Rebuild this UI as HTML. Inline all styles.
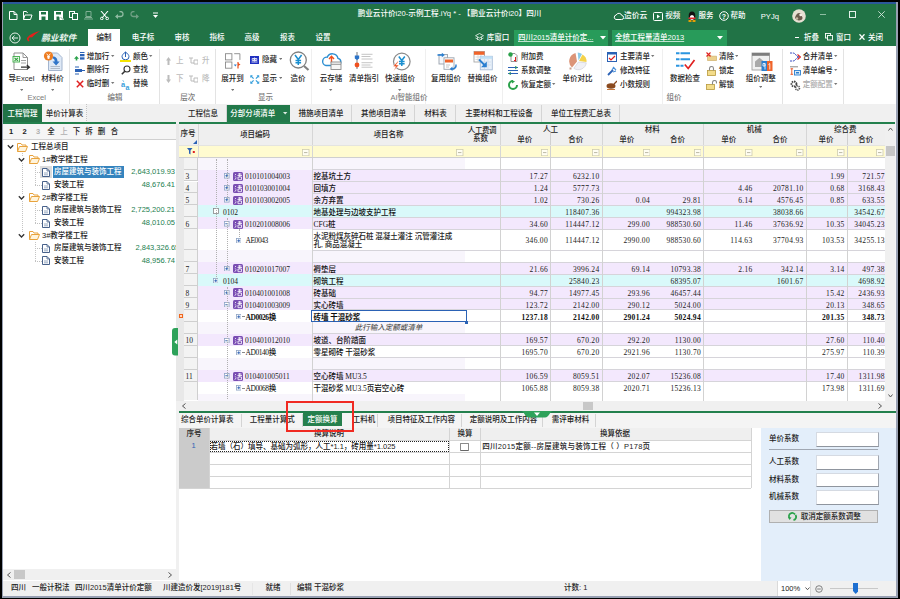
<!DOCTYPE html>
<html lang="zh-CN"><head><meta charset="utf-8"><title>鹏业云计价i20</title><style>
html,body{margin:0;padding:0;}
body{width:900px;height:599px;position:relative;overflow:hidden;background:#fff;
 font-family:"Liberation Sans","Noto Sans CJK SC",sans-serif;font-size:7.5px;font-weight:500;}
div,svg{position:absolute;box-sizing:border-box;}
.t{white-space:nowrap;line-height:12px;height:12px;}
.s{font-family:"Liberation Serif","Noto Sans CJK SC",serif;margin-top:1.600px;}
.sc{font-family:"Liberation Serif","Noto Sans CJK SC",serif;margin-top:0.300px;}
.b{font-weight:bold;}
</style></head><body>
<div style="left:0px;top:0px;width:900px;height:599px;background:#000;"></div>
<div style="left:1.7px;top:1.7px;width:896.5px;height:596px;background:#98a0b2;"></div>
<div style="left:3px;top:2px;width:893.3px;height:594.3px;background:#fff;"></div>
<div style="left:3px;top:1.8px;width:893.3px;height:2px;background:#2b579a;"></div>
<div style="left:3px;top:3.8px;width:893.3px;height:42.2px;background:#217346;"></div>
<svg style="left:9px;top:10.5px" width="9" height="9" viewBox="0 0 9 9"><path d="M0.5 0.5h4.5l3 3v5h-7.5z" fill="none" stroke="#fff" stroke-width="1"/><path d="M5 0.5v3h3" fill="none" stroke="#fff" stroke-width="1"/></svg>
<svg style="left:23px;top:10.5px" width="10" height="9" viewBox="0 0 10 9"><path d="M0.5 8.5v-8h3l1 1.5h0M0.5 8.5l1.5-4.5h7l-1.5 4.5z" fill="none" stroke="#fff" stroke-width="1"/></svg>
<svg style="left:38.5px;top:10.5px" width="9" height="9" viewBox="0 0 9 9"><rect x="0" y="0" width="9" height="9" fill="#fff"/><rect x="2" y="1" width="5" height="2.500" fill="#217346"/><rect x="2.500" y="5.500" width="4" height="3.500" fill="#217346"/></svg>
<svg style="left:53.5px;top:10.5px" width="10" height="9" viewBox="0 0 10 9"><rect x="0" y="0" width="9" height="9" fill="#fff"/><rect x="2" y="1" width="5" height="2.500" fill="#217346"/><rect x="2.500" y="5.500" width="3" height="3.500" fill="#217346"/><path d="M5.500 5l4 4" stroke="#fff" stroke-width="1.600"/><path d="M6.500 6l3 3" stroke="#217346" stroke-width="0.600"/></svg>
<svg style="left:68.5px;top:10.5px" width="9" height="9" viewBox="0 0 9 9"><rect x="0.5" y="0.5" width="5" height="6" fill="none" stroke="#fff"/><rect x="3.5" y="2.5" width="5" height="6" fill="#217346" stroke="#fff"/></svg>
<svg style="left:84px;top:10.5px" width="9" height="9" viewBox="0 0 9 9"><path d="M2 0.5h5v5h-5zM0 8h9M1 6.5h7" fill="none" stroke="#7fae93" stroke-width="1"/></svg>
<svg style="left:100px;top:10.5px" width="9" height="9" viewBox="0 0 9 9"><path d="M1 0l6 7M8 0l-6 7" stroke="#fff" stroke-width="1.1"/><circle cx="1.8" cy="7.5" r="1.3" fill="none" stroke="#fff"/><circle cx="7.2" cy="7.5" r="1.3" fill="none" stroke="#fff"/></svg>
<svg style="left:115px;top:10.5px" width="9" height="9" viewBox="0 0 9 9"><path d="M1 5.5h4.5a2.5 2.5 0 0 0 0-5h-1" fill="none" stroke="#8fbaa1" stroke-width="1.3"/><path d="M0 5.5l3-2.6v5.2z" fill="#8fbaa1"/></svg>
<svg style="left:130px;top:10.5px" width="9" height="9" viewBox="0 0 9 9"><path d="M8 5.5h-4.5a2.5 2.5 0 0 1 0-5h1" fill="none" stroke="#6f9f84" stroke-width="1.3"/><path d="M9 5.5l-3-2.6v5.2z" fill="#6f9f84"/></svg>
<svg style="left:152px;top:12px" width="7" height="7" viewBox="0 0 7 7"><path d="M1 1h5" stroke="#fff" stroke-width="1"/><path d="M1 3h5l-2.5 3z" fill="#fff"/></svg>
<div class="t" style="top:8.0px;font-size:7.6px;color:#fff;left:449.5px;transform:translateX(-50%);">鹏业云计价i20-示例工程.iYq * - 【鹏业云计价i20】四川</div>
<svg style="left:612.7px;top:11.8px" width="11" height="9" viewBox="0 0 11 9"><path d="M3 7.5h5.5a2 2 0 0 0 .3-4a3 3 0 0 0-5.6-.5a2.3 2.3 0 0 0-.2 4.5z" fill="none" stroke="#fff" stroke-width="1"/></svg>
<div class="t" style="top:10.3px;font-size:7.8px;color:#fff;left:624px;">造价云</div>
<svg style="left:652.8px;top:12px" width="10" height="9" viewBox="0 0 10 9"><rect x="0.5" y="0.5" width="9" height="8" rx="1" fill="none" stroke="#fff"/><path d="M4 2.5v4l3-2z" fill="#fff"/></svg>
<div class="t" style="top:10.3px;font-size:7.5px;color:#fff;left:665.3px;">视频</div>
<svg style="left:686.8px;top:10.8px" width="10" height="11" viewBox="0 0 10 11"><ellipse cx="5" cy="5" rx="3.3" ry="4.5" fill="#111"/><ellipse cx="5" cy="6.5" rx="2.2" ry="2.6" fill="#fff"/><path d="M1.5 6.5h7v1.6h-7z" fill="#e0262b"/><ellipse cx="3" cy="10" rx="1.8" ry="0.9" fill="#f5a300"/><ellipse cx="7" cy="10" rx="1.8" ry="0.9" fill="#f5a300"/></svg>
<div class="t" style="top:10.3px;font-size:7.5px;color:#fff;left:698.5px;">服务</div>
<svg style="left:718.6px;top:11.3px" width="10" height="10" viewBox="0 0 10 10"><circle cx="5" cy="5" r="4.3" fill="none" stroke="#fff" stroke-width="1"/><text x="5" y="7.6" font-size="7" font-weight="bold" fill="#fff" text-anchor="middle" font-family="Liberation Sans, sans-serif">?</text></svg>
<div class="t" style="top:10.3px;font-size:7.5px;color:#fff;left:730.5px;">帮助</div>
<div class="t" style="top:11.0px;font-size:7.6px;color:#fff;left:760.8px;">PYJq</div>
<svg style="left:792.4px;top:9.4px" width="14" height="14" viewBox="0 0 14 14"><circle cx="7" cy="7" r="6.800" fill="#e6dfd2"/><path d="M3 9c.500-3 2-5 4.500-5c2 0 3 1.500 2.500 3.500c1 1 .500 3-1 3.500c-2 .800-4.500.500-6-2z" fill="#6b5a4c"/><circle cx="8.800" cy="5.800" r="1.500" fill="#f3eee4"/><circle cx="5" cy="9.500" r="1.200" fill="#c9b9a4"/></svg>
<div style="left:819.7px;top:13.8px;width:6.6px;height:1px;background:#8fbea3;"></div>
<div style="left:848.7px;top:11px;width:7.2px;height:6.8px;border:1px solid #e4f0e9;"></div>
<svg style="left:878.3px;top:11px" width="7" height="7" viewBox="0 0 7 7"><path d="M0.300 0.300l6.400 6.400M6.700 0.300l-6.400 6.400" stroke="#d4e6db" stroke-width="0.900"/></svg>
<svg style="left:8.5px;top:31.5px" width="12" height="12" viewBox="0 0 12 12"><circle cx="6" cy="6" r="5" fill="none" stroke="#e6f0ea" stroke-width="1"/><path d="M3 6h6M3 6l2.6-2.4M3 6l2.6 2.4" stroke="#e6f0ea" stroke-width="1" fill="none"/></svg>
<svg style="left:26px;top:30px" width="15" height="13" viewBox="0 0 15 13"><path d="M1 8c3-4 8-6 13-7c-3 2-6 4-8 6.5c-1-.5-2-.3-3 .5c-.6 1-.2 2 .6 2.700l-1 .8c-1.600-1-2-2.300-1.600-3.500z" fill="#e3201b"/></svg>
<div class="t b" style="top:31.5px;font-size:8.8px;color:#e9f3ed;left:41px;font-style:italic;font-family:"Liberation Serif","Noto Serif CJK SC",serif;">鹏业软件</div>
<div style="left:88px;top:29px;width:32px;height:18px;background:#fff;"></div>
<div class="t" style="top:32.0px;font-size:7.5px;color:#222;left:104px;transform:translateX(-50%);">编制</div>
<div class="t" style="top:32.0px;font-size:7.5px;color:#fff;left:143px;transform:translateX(-50%);">电子标</div>
<div class="t" style="top:32.0px;font-size:7.5px;color:#fff;left:182px;transform:translateX(-50%);">审核</div>
<div class="t" style="top:32.0px;font-size:7.5px;color:#fff;left:217px;transform:translateX(-50%);">指标</div>
<div class="t" style="top:32.0px;font-size:7.5px;color:#fff;left:252px;transform:translateX(-50%);">高级</div>
<div class="t" style="top:32.0px;font-size:7.5px;color:#fff;left:287.5px;transform:translateX(-50%);">报表</div>
<div class="t" style="top:32.0px;font-size:7.5px;color:#fff;left:323px;transform:translateX(-50%);">设置</div>
<svg style="left:475px;top:33px" width="9" height="9" viewBox="0 0 9 9"><path d="M4.500.5l4 2.200l-4 2.200l-4-2.200z" fill="none" stroke="#dcebe2" stroke-width="0.900"/><path d="M0.500 5l4 2.200l4-2.200M2.500 4v3M6.500 4v3" fill="none" stroke="#dcebe2" stroke-width="0.800"/></svg>
<div class="t" style="top:31.5px;font-size:7.5px;color:#fff;left:486.7px;">库窗口</div>
<div style="left:514px;top:30px;width:94px;height:15.5px;background:#289b5a;"></div>
<div class="t" style="top:31.5px;font-size:7.5px;color:#fff;left:518px;text-decoration:underline;text-decoration-color:#bfe3cf;">四川2015清单计价定...</div>
<svg style="left:600px;top:36px" width="6" height="4" viewBox="0 0 6 4"><path d="M0 0h6l-3 3.500z" fill="#fff"/></svg>
<div style="left:611.5px;top:30px;width:115px;height:15.5px;background:#289b5a;"></div>
<div class="t" style="top:31.5px;font-size:7.5px;color:#fff;left:615px;text-decoration:underline;text-decoration-color:#bfe3cf;">全统工程量清单2013</div>
<svg style="left:716.5px;top:36px" width="6" height="4" viewBox="0 0 6 4"><path d="M0 0h6l-3 3.500z" fill="#fff"/></svg>
<div style="left:795.3px;top:37.3px;width:4px;height:1.2px;background:#fff;"></div>
<div class="t" style="top:31.5px;font-size:7.5px;color:#fff;left:804px;">折叠</div>
<svg style="left:824.7px;top:33px" width="8.5" height="8" viewBox="0 0 8.5 8"><rect x="0.500" y="0.500" width="5" height="4.500" fill="none" stroke="#fff" stroke-width="0.900"/><rect x="2.500" y="2.500" width="5" height="4.500" fill="#217346" stroke="#fff" stroke-width="0.900"/></svg>
<div class="t" style="top:31.5px;font-size:7.5px;color:#fff;left:836px;">窗口</div>
<svg style="left:859px;top:34px" width="6" height="6" viewBox="0 0 6 6"><path d="M0.500 0.300l5 5.400M5.500 0.300l-5 5.400" stroke="#fff" stroke-width="1.300"/></svg>
<div class="t" style="top:31.5px;font-size:7.5px;color:#fff;left:868px;">关闭</div>
<div style="left:3px;top:46px;width:893.3px;height:58px;background:#fff;"></div>
<div style="left:69px;top:49px;width:1px;height:55px;background:#e3e3e3;"></div>
<div style="left:158.5px;top:49px;width:1px;height:55px;background:#e3e3e3;"></div>
<div style="left:215px;top:49px;width:1px;height:55px;background:#e3e3e3;"></div>
<div style="left:781.5px;top:49px;width:1px;height:55px;background:#e3e3e3;"></div>
<div style="left:842.5px;top:49px;width:1px;height:55px;background:#e3e3e3;"></div>
<div style="left:311px;top:49px;width:1px;height:55px;background:#efefef;"></div>
<div style="left:424.5px;top:49px;width:1px;height:55px;background:#efefef;"></div>
<div style="left:502px;top:49px;width:1px;height:55px;background:#efefef;"></div>
<div style="left:601px;top:49px;width:1px;height:55px;background:#efefef;"></div>
<div style="left:662px;top:49px;width:1px;height:55px;background:#efefef;"></div>
<svg style="left:12px;top:51.5px" width="19" height="19" viewBox="0 0 19 19"><path d="M2 1h9l4.500 4.500v12h-13.500z" fill="#fff" stroke="#8f8f8f" stroke-width="1"/><path d="M11 1v4.500h4.500" fill="none" stroke="#8f8f8f" stroke-width="0.900"/><path d="M9 8.500h5M9 11h5" stroke="#9a9a9a" stroke-width="0.900"/><path d="M9 15.200h8M14.800 13l2.700 2.200l-2.700 2.200" stroke="#333" stroke-width="1.200" fill="none"/><rect x="1" y="4.500" width="6.500" height="5.500" fill="#eef8ee" stroke="#3fae49" stroke-width="0.900"/><path d="M2.500 5.800l3.500 3M6 5.800l-3.500 3" stroke="#2f9e3a" stroke-width="1.100"/></svg>
<div class="t" style="top:72.7px;font-size:7.5px;color:#222;left:21.5px;transform:translateX(-50%);">导Excel</div>
<svg style="left:19.8px;top:89.2px" width="3.4" height="2.2" viewBox="0 0 3.4 2.2"><path d="M0 0h3.400l-1.700 2z" fill="#777"/></svg>
<svg style="left:43px;top:51px" width="21" height="21" viewBox="0 0 21 21"><path d="M5.500 2h9l4.500 4.500v13h-13.500z" fill="#dfe9f6" stroke="#a3b5cf" stroke-width="1"/><path d="M7.500 15.500h9.500M7.500 17.500h9.500" stroke="#a9b4c4" stroke-width="0.900"/><path d="M9.500 5.500c3.500 0 5 2 5 5h2.200l-3.600 4l-3.600-4h2.200c0-2-.700-3-2.200-3z" fill="#2e74c9"/><circle cx="5.500" cy="5" r="4.600" fill="#ee7d22"/><path d="M3.700 2.700l1.800 2.400l1.800-2.400M5.500 5.100v2.800M4 5.600h3M4 6.900h3" stroke="#fff" stroke-width="0.900" fill="none"/></svg>
<div class="t" style="top:72.7px;font-size:7.5px;color:#222;left:52.5px;transform:translateX(-50%);">材料价</div>
<svg style="left:50.8px;top:89.2px" width="3.4" height="2.2" viewBox="0 0 3.4 2.2"><path d="M0 0h3.400l-1.700 2z" fill="#777"/></svg>
<div class="t" style="top:91.7px;font-size:7.5px;color:#7a7a7a;left:36.7px;transform:translateX(-50%);">Excel</div>
<svg style="left:74px;top:51.5px" width="11" height="9" viewBox="0 0 11 9"><rect x="6" y="0" width="4.500" height="1" fill="#2b62b5"/><rect x="6" y="2" width="4.500" height="2.300" fill="#2b62b5"/><rect x="6" y="5.300" width="4.500" height="2.300" fill="#2b62b5"/><path d="M2.500 4l2.500 2.800h-1.700v1.700h-1.600v-1.700h-1.700z" fill="#2aa14a"/></svg>
<div class="t" style="top:50.5px;font-size:7.5px;color:#222;left:86.7px;">增加行</div>
<svg style="left:111.3px;top:54.900000000000006px" width="3.4" height="2.2" viewBox="0 0 3.4 2.2"><path d="M0 0h3.400l-1.700 2z" fill="#777"/></svg>
<svg style="left:74.5px;top:65.5px" width="10" height="9" viewBox="0 0 10 9"><path d="M0 1h4M0 8h4" stroke="#2b62b5" stroke-width="1"/><rect x="0" y="3" width="7" height="3" fill="#2b62b5"/><path d="M7 4.500h3" stroke="#2b62b5" stroke-width="1"/></svg>
<div class="t" style="top:64.0px;font-size:7.5px;color:#222;left:86.7px;">删除行</div>
<svg style="left:76px;top:80px" width="8" height="8" viewBox="0 0 8 8"><path d="M0.800 0.800l6.400 6.400M7.200 0.800l-6.400 6.400" stroke="#e02020" stroke-width="1.500"/></svg>
<div class="t" style="top:78.0px;font-size:7.5px;color:#222;left:86.7px;">临时删</div>
<svg style="left:111.3px;top:82.4px" width="3.4" height="2.2" viewBox="0 0 3.4 2.2"><path d="M0 0h3.400l-1.700 2z" fill="#777"/></svg>
<svg style="left:120px;top:50.5px" width="11" height="11" viewBox="0 0 11 11"><path d="M5.500 1c-2 1.500-3.500 3-3.500 4.800a3.500 3 0 0 0 7 0c0-1.800-1.500-3.300-3.500-4.800z" fill="#fff" stroke="#2b62b5" stroke-width="1"/><path d="M5.500 1v5" stroke="#2b62b5"/><rect x="0" y="9" width="11" height="2" fill="#f5e400"/></svg>
<div class="t" style="top:50.5px;font-size:7.5px;color:#222;left:133px;">颜色</div>
<svg style="left:149.3px;top:54.900000000000006px" width="3.4" height="2.2" viewBox="0 0 3.4 2.2"><path d="M0 0h3.400l-1.700 2z" fill="#777"/></svg>
<svg style="left:121px;top:65px" width="10" height="10" viewBox="0 0 10 10"><circle cx="6" cy="4" r="3" fill="none" stroke="#333" stroke-width="1.100"/><path d="M3.800 6.200l-3 3" stroke="#333" stroke-width="1.600"/></svg>
<div class="t" style="top:64.0px;font-size:7.5px;color:#222;left:133px;">查找</div>
<svg style="left:121px;top:79.5px" width="10" height="10" viewBox="0 0 10 10"><text x="0" y="6.500" font-size="7.500" font-weight="bold" fill="#3aa0dc" font-family="Liberation Sans, sans-serif">a</text><text x="4.500" y="9.500" font-size="7" font-weight="bold" fill="#3aa0dc" font-family="Liberation Sans, sans-serif">a</text><path d="M1.500 0.300l1.600 1.400" stroke="#3aa0dc" stroke-width="0.800"/></svg>
<div class="t" style="top:78.0px;font-size:7.5px;color:#222;left:133px;">替换</div>
<div class="t" style="top:91.7px;font-size:7.5px;color:#7a7a7a;left:115px;transform:translateX(-50%);">编辑</div>
<svg style="left:165.5px;top:57px" width="5" height="8" viewBox="0 0 5 8"><path d="M2.500 0l2.500 3.500h-1.500v4.500h-2v-4.500h-1.500z" fill="#bcbcbc"/></svg>
<div class="t" style="top:54.6px;font-size:7.5px;color:#bcbcbc;left:179.8px;transform:translateX(-50%);">上</div>
<svg style="left:189px;top:57px" width="9" height="8" viewBox="0 0 9 8"><path d="M0 1h4M2 1v5h3M5 3h4v4h-4z" fill="none" stroke="#bcbcbc" stroke-width="1"/></svg>
<div class="t" style="top:54.6px;font-size:7.5px;color:#bcbcbc;left:205.7px;transform:translateX(-50%);">升</div>
<svg style="left:165.5px;top:75px" width="5" height="8" viewBox="0 0 5 8"><path d="M2.500 8l2.500-3.500h-1.500v-4.500h-2v4.500h-1.500z" fill="#bcbcbc"/></svg>
<div class="t" style="top:73.0px;font-size:7.5px;color:#bcbcbc;left:179.8px;transform:translateX(-50%);">下</div>
<svg style="left:189px;top:75px" width="9" height="8" viewBox="0 0 9 8"><path d="M0 1h4M2 1v5h3M5 3h4v4h-4z" fill="none" stroke="#bcbcbc" stroke-width="1"/></svg>
<div class="t" style="top:73.0px;font-size:7.5px;color:#bcbcbc;left:205.7px;transform:translateX(-50%);">降</div>
<div class="t" style="top:91.7px;font-size:7.5px;color:#7a7a7a;left:187.8px;transform:translateX(-50%);">层次</div>
<svg style="left:224.5px;top:52.5px" width="16" height="16" viewBox="0 0 16 16"><rect x="0.500" y="0.700" width="6.400" height="6.200" fill="none" stroke="#8a8a8a" stroke-width="0.900"/><path d="M9.200 0.700h5.700v6.200" fill="none" stroke="#8a8a8a" stroke-width="0.900"/><rect x="0.500" y="9" width="6.400" height="6.200" fill="none" stroke="#8a8a8a" stroke-width="0.900"/><path d="M8.800 11.500h3l-1.500 2z" fill="#2b7fd0"/><path d="M13 9v6.500" stroke="#e8501e" stroke-width="1.200"/><path d="M13 10l2.500 1.500l-2.500 1.500z" fill="#e8501e"/></svg>
<div class="t" style="top:72.7px;font-size:7.5px;color:#222;left:232.5px;transform:translateX(-50%);">展开到</div>
<svg style="left:230.8px;top:89.2px" width="3.4" height="2.2" viewBox="0 0 3.4 2.2"><path d="M0 0h3.400l-1.700 2z" fill="#777"/></svg>
<svg style="left:250px;top:55.8px" width="9" height="8" viewBox="0 0 9 8"><rect x="0" y="0" width="9" height="8" fill="#1f2fc0"/><path d="M1.500 6h6M2.200 2.500h1.800v2h-1.800zM5 2.500h1.800v2h-1.800zM4.500 1.500v4" stroke="#fff" stroke-width="0.800" fill="none"/></svg>
<div class="t" style="top:54.0px;font-size:7.5px;color:#222;left:262px;">隐藏</div>
<svg style="left:278.8px;top:58.400000000000006px" width="3.4" height="2.2" viewBox="0 0 3.4 2.2"><path d="M0 0h3.400l-1.700 2z" fill="#777"/></svg>
<svg style="left:250px;top:74.5px" width="9.5" height="9" viewBox="0 0 9.5 9"><path d="M1 1l2.600 2.600M8.500 1l-2.600 2.600M1 8l2.600-2.600M8.500 8l-2.600-2.600" stroke="#3aa0dc" stroke-width="1.200" fill="none"/><path d="M0.300 0.300h2.600l-2.600 2.600zM9.200 0.300h-2.600l2.600 2.600zM0.300 8.700h2.600l-2.600-2.600zM9.200 8.700h-2.600l2.600-2.600z" fill="#3aa0dc"/></svg>
<div class="t" style="top:72.7px;font-size:7.5px;color:#222;left:262px;">显示</div>
<svg style="left:278.8px;top:77.10000000000001px" width="3.4" height="2.2" viewBox="0 0 3.4 2.2"><path d="M0 0h3.400l-1.700 2z" fill="#777"/></svg>
<div class="t" style="top:91.7px;font-size:7.5px;color:#7a7a7a;left:265.5px;transform:translateX(-50%);">显示</div>
<svg style="left:288.5px;top:51px" width="21" height="20" viewBox="0 0 21 20"><circle cx="9.300" cy="9" r="8" fill="#fff" stroke="#808080" stroke-width="1.300"/><path d="M15 15l4.500 4" stroke="#808080" stroke-width="2.200"/><path d="M6 4l3.300 4.500l3.300-4.500M9.300 8.500v5.500M6.500 9.500h5.600M6.500 11.700h5.600" stroke="#1a8fd0" stroke-width="1.500" fill="none"/></svg>
<div class="t" style="top:72.7px;font-size:7.5px;color:#222;left:298px;transform:translateX(-50%);">造价</div>
<svg style="left:320.5px;top:52px" width="21" height="18" viewBox="0 0 21 18"><path d="M5 13.500h11.500a3.600 3.600 0 0 0 .500-7.100a5.700 5.700 0 0 0-10.800-1.200a4.200 4.200 0 0 0-1.200 8.300z" fill="#fff" stroke="#2d8fd2" stroke-width="1.400"/><path d="M10.500 11v-6.500M8 7l2.500-2.800l2.500 2.800" stroke="#f0501e" stroke-width="1.400" fill="none"/><rect x="10" y="10" width="10" height="7.500" fill="#f6f6f6" stroke="#8a8a8a" stroke-width="0.900"/><path d="M10 12.300h10" stroke="#8a8a8a" stroke-width="0.900"/></svg>
<div class="t" style="top:72.7px;font-size:7.5px;color:#222;left:331px;transform:translateX(-50%);">云存储</div>
<svg style="left:329.3px;top:89.2px" width="3.4" height="2.2" viewBox="0 0 3.4 2.2"><path d="M0 0h3.400l-1.700 2z" fill="#777"/></svg>
<svg style="left:354px;top:52px" width="19" height="18" viewBox="0 0 19 18"><path d="M3 0v17" stroke="#666" stroke-width="0.900"/><path d="M0.800 3.500h4.400v3l-2.200 1.500l-2.200-1.500z" fill="#2b73c8"/><circle cx="3" cy="13" r="2.400" fill="#f0501e"/><path d="M7.500 2.300h11M7.500 4.500h9M7.500 7h11M7.500 10.700h11M7.500 13h9M7.500 15.200h11" stroke="#b5b5b5" stroke-width="0.800"/></svg>
<div class="t" style="top:72.7px;font-size:7.5px;color:#222;left:364px;transform:translateX(-50%);">清单指引</div>
<svg style="left:390.5px;top:51.5px" width="21" height="20" viewBox="0 0 21 20"><circle cx="10.800" cy="9.500" r="8.300" fill="#fff" stroke="#8a8a8a" stroke-width="1.200"/><path d="M7.800 4.500l3 4l3-4M10.800 8.500v5.500M8 9.500h5.600M8 11.700h5.600" stroke="#1a8fd0" stroke-width="1.500" fill="none"/><path d="M6.500 9.500l-4.500 5h2.800l-2.300 4.500l5.500-6h-2.800l2.300-3.500z" fill="#f0501e" stroke="#fff" stroke-width="0.500"/></svg>
<div class="t" style="top:72.7px;font-size:7.5px;color:#222;left:400px;transform:translateX(-50%);">快速组价</div>
<svg style="left:398.3px;top:89.2px" width="3.4" height="2.2" viewBox="0 0 3.4 2.2"><path d="M0 0h3.400l-1.700 2z" fill="#777"/></svg>
<div class="t" style="top:91.7px;font-size:7.5px;color:#7a7a7a;left:409px;transform:translateX(-50%);">AI智能组价</div>
<svg style="left:436.5px;top:52px" width="21" height="19" viewBox="0 0 21 19"><rect x="2" y="2.500" width="8.500" height="9.500" fill="#f4f6fa" stroke="#9aa3ad" stroke-width="0.900"/><path d="M0.500 3h5" stroke="#2b7fd0" stroke-width="1.600"/><path d="M4.800 0.800l3 2.200l-3 2.200z" fill="#2b7fd0"/><rect x="7" y="5.800" width="10" height="11.500" fill="#fff" stroke="#9aa3ad" stroke-width="0.900"/><rect x="8" y="7.500" width="8" height="3" fill="#f0642a"/><path d="M9 13h4M9 15h3" stroke="#b5b5b5" stroke-width="0.800"/><path d="M19 12.500c.500 3-1.500 4.500-4.500 4.500" stroke="#2b7fd0" stroke-width="1.500" fill="none"/><path d="M15.500 14.500l-2.800 2.500l2.800 2z" fill="#2b7fd0"/></svg>
<div class="t" style="top:72.7px;font-size:7.5px;color:#222;left:446px;transform:translateX(-50%);">复用组价</div>
<svg style="left:472.5px;top:51px" width="22" height="20" viewBox="0 0 22 20"><rect x="1" y="0.500" width="10.500" height="10.500" fill="#fff" stroke="#a8a8a8" stroke-width="0.900"/><rect x="1" y="0.500" width="10.500" height="3.300" fill="#f0642a"/><path d="M2.500 6h7.500M2.500 8.500h7.500M5 4v7M8 4v7" stroke="#cfcfcf" stroke-width="0.700"/><rect x="7.300" y="5.300" width="12" height="13.500" fill="#e9f1fa" stroke="#a9bdd6" stroke-width="0.900"/><rect x="7.300" y="5.300" width="12" height="2.500" fill="#bfe0f7"/><path d="M9 11h9M9 14h9M11.500 8v10M15 8v10" stroke="#cdd8e6" stroke-width="0.700"/><path d="M6 8.500l6.500 6.500" stroke="#2b7fd0" stroke-width="1.800"/><path d="M13.800 10.500v5.800h-5.800z" fill="#2b7fd0"/></svg>
<div class="t" style="top:72.7px;font-size:7.5px;color:#222;left:482.5px;transform:translateX(-50%);">替换组价</div>
<svg style="left:508px;top:52px" width="10" height="10" viewBox="0 0 10 10"><path d="M3 1.500h4l2 2v6h-6z" fill="#fff" stroke="#8a8a8a" stroke-width="0.900"/><circle cx="2.500" cy="2.500" r="2.200" fill="#2aa14a"/><path d="M7.500 5v4M6 8l1.500 1.500" stroke="#e02020" stroke-width="1"/></svg>
<div class="t" style="top:51.0px;font-size:7.5px;color:#222;left:521px;">附加费</div>
<svg style="left:508px;top:66px" width="10" height="9" viewBox="0 0 10 9"><path d="M0 1.500h10M0 4.500h10M0 7.500h10" stroke="#2b62b5" stroke-width="1"/><path d="M7 0l2 1.500l-2 1.500M3 6l-2 1.500l2 1.500" stroke="#2aa14a" stroke-width="0.900" fill="none"/></svg>
<div class="t" style="top:64.5px;font-size:7.5px;color:#222;left:521px;">系数调整</div>
<svg style="left:508px;top:79.5px" width="10" height="10" viewBox="0 0 10 10"><path d="M5 1a4 4 0 1 0 4 4" stroke="#2aa14a" stroke-width="2" fill="none"/><path d="M4 0l3 1.500l-3 2z" fill="#2aa14a"/></svg>
<div class="t" style="top:78.5px;font-size:7.5px;color:#222;left:521px;">恢复定额</div>
<svg style="left:552.3px;top:82.9px" width="3.4" height="2.2" viewBox="0 0 3.4 2.2"><path d="M0 0h3.400l-1.700 2z" fill="#777"/></svg>
<svg style="left:568.5px;top:52px" width="19" height="19" viewBox="0 0 19 19"><path d="M8 9.500l-1.500-8.500a8.500 8.500 0 0 0-3.500 14.500z" fill="#dc9477"/><path d="M9.500 8.500l-.800-8a8 8 0 0 1 4.300 1.500z" fill="#8ccbe8"/><path d="M10 9l3.500-6.500a8 8 0 0 1 4 7.500z" fill="#f4d24a"/><path d="M9.500 10l7.800.800a8 8 0 0 1-12.500 5.500z" fill="#f0f0f5" stroke="#c9c9d2" stroke-width="0.600"/><rect x="0.500" y="15.500" width="2" height="2" fill="#c9a08c"/></svg>
<div class="t" style="top:72.7px;font-size:7.5px;color:#222;left:577.5px;transform:translateX(-50%);">单价对比</div>
<svg style="left:606.5px;top:52.2px" width="10" height="10" viewBox="0 0 10 10"><rect x="0.500" y="0.500" width="9" height="9" fill="#fff" stroke="#2b62b5" stroke-width="1"/><rect x="0.500" y="0.500" width="9" height="2" fill="#2b62b5"/><path d="M2 6l2 2l4-4" stroke="#e02020" stroke-width="1.200" fill="none"/></svg>
<div class="t" style="top:51.0px;font-size:7.5px;color:#222;left:620px;">主要清单</div>
<svg style="left:651.3px;top:55.400000000000006px" width="3.4" height="2.2" viewBox="0 0 3.4 2.2"><path d="M0 0h3.400l-1.700 2z" fill="#777"/></svg>
<svg style="left:606.5px;top:66.2px" width="10" height="10" viewBox="0 0 10 10"><path d="M1 9l5-5" stroke="#2b62b5" stroke-width="1.800"/><path d="M6 1l3 3M5 4l2-3M9 5l-3 1" stroke="#4a90d9" stroke-width="1.200"/></svg>
<div class="t" style="top:65.0px;font-size:7.5px;color:#222;left:620px;">修改特征</div>
<svg style="left:606px;top:80.2px" width="11" height="10" viewBox="0 0 11 10"><ellipse cx="5" cy="6" rx="4.500" ry="2.800" fill="#8b4a1f"/><path d="M8 4l3-3" stroke="#8b4a1f" stroke-width="1.300"/><path d="M1 9.500h8" stroke="#c9793c" stroke-width="1"/></svg>
<div class="t" style="top:78.7px;font-size:7.5px;color:#222;left:620px;">小数规则</div>
<svg style="left:675px;top:51px" width="21" height="19" viewBox="0 0 21 19"><path d="M1 2.200h3.500M5.500 2.200h9.500M1 8.300h3.500M5.500 8.300h9.500M1 14.800h3.500M5.500 14.800h3" stroke="#2b95e0" stroke-width="2"/><path d="M9.800 13.500l3.400 4l6.300-8.500" stroke="#e02020" stroke-width="1.700" fill="none"/></svg>
<div class="t" style="top:72.7px;font-size:7.5px;color:#222;left:685px;transform:translateX(-50%);">数据检查</div>
<svg style="left:705.5px;top:52px" width="11" height="9" viewBox="0 0 11 9"><path d="M1.500 8.500v-5.500h3l1 1.200h5v4.300z" fill="#ecd08c" stroke="#c9a85a" stroke-width="0.600"/><path d="M0.500 0.500l4 4M4.500 0.500l-4 4" stroke="#e02020" stroke-width="1.100"/></svg>
<div class="t" style="top:51.0px;font-size:7.5px;color:#222;left:719px;">清除</div>
<svg style="left:735.0px;top:55.400000000000006px" width="3.4" height="2.2" viewBox="0 0 3.4 2.2"><path d="M0 0h3.400l-1.700 2z" fill="#777"/></svg>
<svg style="left:706.5px;top:66.2px" width="9" height="10" viewBox="0 0 9 10"><rect x="0.500" y="4.500" width="8" height="5" fill="#f3dc8a" stroke="#b89a3c" stroke-width="0.800"/><path d="M2.500 4.500v-2a2 2 0 0 1 4 0v2" fill="none" stroke="#8a8a8a" stroke-width="1.100"/></svg>
<div class="t" style="top:65.0px;font-size:7.5px;color:#222;left:719px;">锁定</div>
<svg style="left:705.5px;top:79.7px" width="11" height="10" viewBox="0 0 11 10"><rect x="0.500" y="4.500" width="8" height="5" fill="#f3dc8a" stroke="#b89a3c" stroke-width="0.800"/><path d="M6.500 4.500v-2a2 2 0 0 1 4 0v1" fill="none" stroke="#8a8a8a" stroke-width="1.100"/></svg>
<div class="t" style="top:78.7px;font-size:7.5px;color:#222;left:719px;">解锁</div>
<svg style="left:751px;top:51.5px" width="22" height="20" viewBox="0 0 22 20"><rect x="1" y="1" width="17.500" height="17" fill="#f0f0f0" stroke="#a0a0a0" stroke-width="0.900"/><rect x="1" y="1" width="17.500" height="2.800" fill="#7d7d7d"/><path d="M4 15v-5.500l4.500-3.800l4.500 3.800v5.500z" fill="#a9a9a9"/><rect x="10.500" y="9" width="5.500" height="10" fill="#2b7fd0"/><rect x="16" y="9" width="5.500" height="10" fill="#f0642a"/><path d="M12 11.500h2v2.500h-2zM14 11.500v6M18.800 11.500v6M17.500 12.500l1.300-1" stroke="#fff" stroke-width="0.800" fill="none"/></svg>
<div class="t" style="top:72.8px;font-size:7.5px;color:#222;left:760.7px;transform:translateX(-50%);">组价调整</div>
<svg style="left:759.0px;top:86.2px" width="3.4" height="2.2" viewBox="0 0 3.4 2.2"><path d="M0 0h3.400l-1.700 2z" fill="#777"/></svg>
<div class="t" style="top:91.7px;font-size:7.5px;color:#7a7a7a;left:674px;transform:translateX(-50%);">组价</div>
<svg style="left:789.5px;top:52.2px" width="11" height="10" viewBox="0 0 11 10"><path d="M0 1h3c3 0 3 4 6 4M0 9h3c3 0 3-4 6-4" stroke="#3a4fc0" stroke-width="1" stroke-dasharray="2 0.800" fill="none"/><path d="M7.500 2.500l3 2.500l-3 2.500" stroke="#e02020" stroke-width="1.100" fill="none"/></svg>
<div class="t" style="top:51.0px;font-size:7.5px;color:#222;left:802.7px;">合并清单</div>
<svg style="left:834.3px;top:55.400000000000006px" width="3.4" height="2.2" viewBox="0 0 3.4 2.2"><path d="M0 0h3.400l-1.700 2z" fill="#777"/></svg>
<svg style="left:790px;top:66.2px" width="11" height="10" viewBox="0 0 11 10"><path d="M0 0.800h8" stroke="#8a8a8a" stroke-width="1"/><path d="M1.800 2.500v6M0.500 2.800h2.600M0.500 8.300h2.600" stroke="#e8501e" stroke-width="0.900" fill="none"/><rect x="4.500" y="4.500" width="6" height="4.500" fill="#dcecf8" stroke="#2b7fd0" stroke-width="0.900"/><rect x="6" y="6" width="3" height="1.500" fill="#2b7fd0"/></svg>
<div class="t" style="top:65.0px;font-size:7.5px;color:#222;left:802.7px;">清单编号</div>
<svg style="left:834.3px;top:69.4px" width="3.4" height="2.2" viewBox="0 0 3.4 2.2"><path d="M0 0h3.400l-1.700 2z" fill="#777"/></svg>
<svg style="left:790px;top:79.7px" width="11" height="11" viewBox="0 0 11 11"><circle cx="4" cy="4" r="2.500" fill="none" stroke="#444" stroke-width="1.800" stroke-dasharray="1.500 0.800"/><circle cx="7.500" cy="8" r="2" fill="none" stroke="#555" stroke-width="1.600" stroke-dasharray="1.200 0.700"/></svg>
<div class="t" style="top:78.7px;font-size:7.5px;color:#a8a8a8;left:802.7px;">定额配置</div>
<svg style="left:834.3px;top:83.10000000000001px" width="3.4" height="2.2" viewBox="0 0 3.4 2.2"><path d="M0 0h3.400l-1.700 2z" fill="#777"/></svg>
<div style="left:3px;top:104px;width:893.3px;height:19px;background:#f0f0f0;"></div>
<div style="left:3px;top:104px;width:39px;height:18.5px;background:#217346;"></div>
<div class="t" style="top:107.5px;font-size:7.5px;color:#fff;left:22.5px;transform:translateX(-50%);">工程管理</div>
<div style="left:42px;top:104px;width:45px;height:18.5px;background:#f4f4f4;border-right:1px dotted #c4c4c4;"></div>
<div class="t" style="top:107.5px;font-size:7.5px;color:#222;left:64.5px;transform:translateX(-50%);">单价计算表</div>
<div style="left:3px;top:122.3px;width:173px;height:1.7px;background:#23804d;"></div>
<div style="left:3px;top:124px;width:173px;height:457px;background:#fff;"></div>
<div style="left:3px;top:124px;width:173px;height:15.5px;background:#f5f5f5;"></div>
<div style="left:176px;top:104px;width:3px;height:477px;background:#f0f0f0;"></div>
<div class="t b" style="top:125.5px;font-size:7.5px;color:#222;left:11px;transform:translateX(-50%);">1</div>
<div class="t b" style="top:125.5px;font-size:7.5px;color:#222;left:24.5px;transform:translateX(-50%);">2</div>
<div class="t b" style="top:125.5px;font-size:7.5px;color:#b0b0b0;left:38px;transform:translateX(-50%);">3</div>
<div class="t" style="top:125.5px;font-size:7.5px;color:#222;left:51px;transform:translateX(-50%);">全</div>
<div class="t" style="top:125.5px;font-size:7.5px;color:#b0b0b0;left:64px;transform:translateX(-50%);">上</div>
<div class="t" style="top:125.5px;font-size:7.5px;color:#222;left:76.5px;transform:translateX(-50%);">下</div>
<div class="t" style="top:125.5px;font-size:7.5px;color:#222;left:89px;transform:translateX(-50%);">拆</div>
<div class="t" style="top:125.5px;font-size:7.5px;color:#222;left:101.5px;transform:translateX(-50%);">删</div>
<div class="t" style="top:125.5px;font-size:7.5px;color:#222;left:114.5px;transform:translateX(-50%);">合</div>
<div style="left:3px;top:139px;width:173px;height:1px;background:#d0d0d0;"></div>
<div style="left:22.4px;top:153.2px;width:1px;height:82.48px;border-left:1px dotted #c4c4c4;"></div>
<div style="left:34.7px;top:165.83999999999997px;width:1px;height:19.28px;border-left:1px dotted #c4c4c4;"></div>
<div style="left:34.7px;top:203.76px;width:1px;height:19.28px;border-left:1px dotted #c4c4c4;"></div>
<div style="left:34.7px;top:241.68px;width:1px;height:19.28px;border-left:1px dotted #c4c4c4;"></div>
<svg style="left:7.0px;top:144.2px" width="7" height="6" viewBox="0 0 7 6"><rect x="0" y="0" width="7" height="6" fill="#fff"/><path d="M0.800 1.300l2.700 2.700l2.700-2.700" stroke="#333" stroke-width="1.300" fill="none"/></svg>
<svg style="left:17px;top:142.7px" width="11" height="9" viewBox="0 0 11 9"><path d="M0.500 8.500v-8h3.500l1 1.500h4v1.500" fill="none" stroke="#e8a33d" stroke-width="1"/><path d="M0.500 8.500l2-5h8l-2 5z" fill="#fff4dc" stroke="#e8a33d" stroke-width="1"/></svg>
<div class="t" style="top:141.2px;font-size:7.5px;color:#222;left:31px;">工程总项目</div>
<svg style="left:18.1px;top:156.83999999999997px" width="7" height="6" viewBox="0 0 7 6"><rect x="0" y="0" width="7" height="6" fill="#fff"/><path d="M0.800 1.300l2.700 2.700l2.700-2.700" stroke="#333" stroke-width="1.300" fill="none"/></svg>
<svg style="left:28.5px;top:155.33999999999997px" width="11" height="9" viewBox="0 0 11 9"><path d="M0.500 8.500v-8h3.500l1 1.500h4v1.500" fill="none" stroke="#e8a33d" stroke-width="1"/><path d="M0.500 8.500l2-5h8l-2 5z" fill="#fff4dc" stroke="#e8a33d" stroke-width="1"/></svg>
<div class="t" style="top:153.83999999999997px;font-size:7.5px;color:#222;left:42px;">1#教学楼工程</div>
<div style="left:35px;top:172.48px;width:7px;height:1px;border-top:1px dotted #c0c0c0;"></div>
<svg style="left:42.3px;top:167.98px" width="8" height="9" viewBox="0 0 8 9"><path d="M0.500 0.500h4.500l2.500 2.500v5.500h-7z" fill="#fff" stroke="#34507e" stroke-width="0.900"/><path d="M5 0.500v2.500h2.500" fill="none" stroke="#34507e" stroke-width="0.700"/><path d="M2 5h4M2 6.800h4" stroke="#6f86ab" stroke-width="0.700"/></svg>
<div style="left:39.7px;top:166.48px;width:12.8px;height:12px;background:#dcdcdc;"></div>
<svg style="left:42.3px;top:167.98px" width="8" height="9" viewBox="0 0 8 9"><path d="M0.500 0.500h4.500l2.500 2.500v5.500h-7z" fill="#fff" stroke="#34507e" stroke-width="0.900"/><path d="M5 0.500v2.500h2.500" fill="none" stroke="#34507e" stroke-width="0.700"/><path d="M2 5h4M2 6.800h4" stroke="#6f86ab" stroke-width="0.700"/></svg>
<div style="left:52.5px;top:166.48px;width:71px;height:12px;background:#3584be;"></div>
<div class="t" style="top:166.48px;font-size:7.5px;color:#fff;left:54px;">房屋建筑与装饰工程</div>
<div style="left:124px;top:166.48px;width:52px;height:12px;overflow:hidden;"><div class="t" style="right:1px;top:0;font-size:7.5px;color:#23804f;">2,643,019.93</div></div>
<div style="left:35px;top:185.12px;width:7px;height:1px;border-top:1px dotted #c0c0c0;"></div>
<svg style="left:42.3px;top:180.62px" width="8" height="9" viewBox="0 0 8 9"><path d="M0.500 0.500h4.500l2.500 2.500v5.500h-7z" fill="#fff" stroke="#34507e" stroke-width="0.900"/><path d="M5 0.500v2.500h2.500" fill="none" stroke="#34507e" stroke-width="0.700"/><path d="M2 5h4M2 6.800h4" stroke="#6f86ab" stroke-width="0.700"/></svg>
<div class="t" style="top:179.12px;font-size:7.5px;color:#222;left:54px;">安装工程</div>
<div style="left:124px;top:179.12px;width:52px;height:12px;overflow:hidden;"><div class="t" style="right:1px;top:0;font-size:7.5px;color:#23804f;">48,676.41</div></div>
<svg style="left:18.1px;top:194.76px" width="7" height="6" viewBox="0 0 7 6"><rect x="0" y="0" width="7" height="6" fill="#fff"/><path d="M0.800 1.300l2.700 2.700l2.700-2.700" stroke="#333" stroke-width="1.300" fill="none"/></svg>
<svg style="left:28.5px;top:193.26px" width="11" height="9" viewBox="0 0 11 9"><path d="M0.500 8.500v-8h3.500l1 1.500h4v1.500" fill="none" stroke="#e8a33d" stroke-width="1"/><path d="M0.500 8.500l2-5h8l-2 5z" fill="#fff4dc" stroke="#e8a33d" stroke-width="1"/></svg>
<div class="t" style="top:191.76px;font-size:7.5px;color:#222;left:42px;">2#教学楼工程</div>
<div style="left:35px;top:210.39999999999998px;width:7px;height:1px;border-top:1px dotted #c0c0c0;"></div>
<svg style="left:42.3px;top:205.89999999999998px" width="8" height="9" viewBox="0 0 8 9"><path d="M0.500 0.500h4.500l2.500 2.500v5.500h-7z" fill="#fff" stroke="#34507e" stroke-width="0.900"/><path d="M5 0.500v2.500h2.500" fill="none" stroke="#34507e" stroke-width="0.700"/><path d="M2 5h4M2 6.800h4" stroke="#6f86ab" stroke-width="0.700"/></svg>
<div class="t" style="top:204.39999999999998px;font-size:7.5px;color:#222;left:54px;">房屋建筑与装饰工程</div>
<div style="left:124px;top:204.39999999999998px;width:52px;height:12px;overflow:hidden;"><div class="t" style="right:1px;top:0;font-size:7.5px;color:#23804f;">2,725,200.21</div></div>
<div style="left:35px;top:223.04px;width:7px;height:1px;border-top:1px dotted #c0c0c0;"></div>
<svg style="left:42.3px;top:218.54px" width="8" height="9" viewBox="0 0 8 9"><path d="M0.500 0.500h4.500l2.500 2.500v5.500h-7z" fill="#fff" stroke="#34507e" stroke-width="0.900"/><path d="M5 0.500v2.500h2.500" fill="none" stroke="#34507e" stroke-width="0.700"/><path d="M2 5h4M2 6.800h4" stroke="#6f86ab" stroke-width="0.700"/></svg>
<div class="t" style="top:217.04px;font-size:7.5px;color:#222;left:54px;">安装工程</div>
<div style="left:124px;top:217.04px;width:52px;height:12px;overflow:hidden;"><div class="t" style="right:1px;top:0;font-size:7.5px;color:#23804f;">48,010.05</div></div>
<svg style="left:18.1px;top:232.68px" width="7" height="6" viewBox="0 0 7 6"><rect x="0" y="0" width="7" height="6" fill="#fff"/><path d="M0.800 1.300l2.700 2.700l2.700-2.700" stroke="#333" stroke-width="1.300" fill="none"/></svg>
<svg style="left:28.5px;top:231.18px" width="11" height="9" viewBox="0 0 11 9"><path d="M0.500 8.500v-8h3.500l1 1.500h4v1.500" fill="none" stroke="#e8a33d" stroke-width="1"/><path d="M0.500 8.500l2-5h8l-2 5z" fill="#fff4dc" stroke="#e8a33d" stroke-width="1"/></svg>
<div class="t" style="top:229.68px;font-size:7.5px;color:#222;left:42px;">3#教学楼工程</div>
<div style="left:35px;top:248.32px;width:7px;height:1px;border-top:1px dotted #c0c0c0;"></div>
<svg style="left:42.3px;top:243.82px" width="8" height="9" viewBox="0 0 8 9"><path d="M0.500 0.500h4.500l2.500 2.500v5.500h-7z" fill="#fff" stroke="#34507e" stroke-width="0.900"/><path d="M5 0.500v2.500h2.500" fill="none" stroke="#34507e" stroke-width="0.700"/><path d="M2 5h4M2 6.800h4" stroke="#6f86ab" stroke-width="0.700"/></svg>
<div class="t" style="top:242.32px;font-size:7.5px;color:#222;left:54px;">房屋建筑与装饰工程</div>
<div style="left:124px;top:242.32px;width:52px;height:12px;overflow:hidden;"><div class="t" style="left:11.500px;top:0;font-size:7.5px;color:#23804f;">2,843,326.65</div></div>
<div style="left:35px;top:260.96px;width:7px;height:1px;border-top:1px dotted #c0c0c0;"></div>
<svg style="left:42.3px;top:256.46px" width="8" height="9" viewBox="0 0 8 9"><path d="M0.500 0.500h4.500l2.500 2.500v5.500h-7z" fill="#fff" stroke="#34507e" stroke-width="0.900"/><path d="M5 0.500v2.500h2.500" fill="none" stroke="#34507e" stroke-width="0.700"/><path d="M2 5h4M2 6.800h4" stroke="#6f86ab" stroke-width="0.700"/></svg>
<div class="t" style="top:254.95999999999998px;font-size:7.5px;color:#222;left:54px;">安装工程</div>
<div style="left:124px;top:254.95999999999998px;width:52px;height:12px;overflow:hidden;"><div class="t" style="right:1px;top:0;font-size:7.5px;color:#23804f;">48,956.74</div></div>
<div style="left:3px;top:568.5px;width:173px;height:11px;background:#f0f0f0;"></div>
<svg style="left:7px;top:572px" width="4" height="6" viewBox="0 0 4 6"><path d="M3.500 0.500l-3 2.500l3 2.500" stroke="#555" stroke-width="1" fill="none"/></svg>
<div style="left:14px;top:569.5px;width:11px;height:9px;background:#c8c8c8;"></div>
<svg style="left:168px;top:572px" width="4" height="6" viewBox="0 0 4 6"><path d="M0.500 0.500l3 2.500l-3 2.500" stroke="#555" stroke-width="1" fill="none"/></svg>
<div style="left:179px;top:105px;width:48px;height:17px;background:#f0f0f0;border-right:1px solid #d4d4d4;"></div>
<div class="t" style="top:107.5px;font-size:7.5px;color:#222;left:203.0px;transform:translateX(-50%);">工程信息</div>
<div style="left:227px;top:105px;width:63px;height:18px;background:#22794a;"></div>
<div class="t" style="top:107.5px;font-size:7.5px;color:#fff;left:230.3px;">分部分项清单</div>
<svg style="left:283.3px;top:112.3px" width="4.4" height="2.6" viewBox="0 0 4.4 2.6"><path d="M0 0h4.400l-2.200 2.600z" fill="#dcebe2"/></svg>
<div style="left:290px;top:105px;width:62px;height:17px;background:#f0f0f0;border-right:1px solid #d4d4d4;"></div>
<div class="t" style="top:107.5px;font-size:7.5px;color:#222;left:321.0px;transform:translateX(-50%);">措施项目清单</div>
<div style="left:352px;top:105px;width:63px;height:17px;background:#f0f0f0;border-right:1px solid #d4d4d4;"></div>
<div class="t" style="top:107.5px;font-size:7.5px;color:#222;left:383.5px;transform:translateX(-50%);">其他项目清单</div>
<div style="left:415px;top:105px;width:41px;height:17px;background:#f0f0f0;border-right:1px solid #d4d4d4;"></div>
<div class="t" style="top:107.5px;font-size:7.5px;color:#222;left:435.5px;transform:translateX(-50%);">材料表</div>
<div style="left:456px;top:105px;width:86px;height:17px;background:#f0f0f0;border-right:1px solid #d4d4d4;"></div>
<div class="t" style="top:107.5px;font-size:7.5px;color:#222;left:499.0px;transform:translateX(-50%);">主要材料和工程设备</div>
<div style="left:542px;top:105px;width:78px;height:17px;background:#f0f0f0;border-right:1px solid #d4d4d4;"></div>
<div class="t" style="top:107.5px;font-size:7.5px;color:#222;left:581.0px;transform:translateX(-50%);">单位工程费汇总表</div>
<div style="left:179px;top:121.9px;width:717px;height:1.7px;background:#23804d;"></div>
<div style="left:179px;top:123.5px;width:706px;height:22px;background:#efefef;"></div>
<div style="left:179px;top:145.5px;width:706px;height:12px;background:#fffbd0;"></div>
<div style="left:179px;top:157.5px;width:706px;height:243px;background:#fff;"></div>
<div style="left:176px;top:123.5px;width:3px;height:277px;background:#e8e8e8;"></div>
<div style="left:179px;top:157.5px;width:4.5px;height:243px;background:#e8e8e8;"></div>
<div style="left:198.4px;top:123.5px;width:1px;height:34px;background:#d6d6d6;"></div>
<div style="left:311.5px;top:123.5px;width:1px;height:34px;background:#d6d6d6;"></div>
<div style="left:499.5px;top:123.5px;width:1px;height:34px;background:#d6d6d6;"></div>
<div style="left:601.5px;top:123.5px;width:1px;height:34px;background:#d6d6d6;"></div>
<div style="left:703px;top:123.5px;width:1px;height:34px;background:#d6d6d6;"></div>
<div style="left:805.5px;top:123.5px;width:1px;height:34px;background:#d6d6d6;"></div>
<div style="left:550px;top:131px;width:1px;height:26.5px;background:#d0d0d0;"></div>
<div style="left:846.5px;top:131px;width:1px;height:26.5px;background:#d0d0d0;"></div>
<div style="left:499.5px;top:134px;width:385.5px;height:0.01px;"></div>
<div style="left:179px;top:145px;width:706px;height:1px;background:#e4e4e0;"></div>
<div style="left:179px;top:157px;width:706px;height:1px;background:#cfcfcf;"></div>
<div class="t" style="top:128.0px;font-size:7.5px;color:#222;left:188px;transform:translateX(-50%);">序号</div>
<svg style="left:192.5px;top:139.8px" width="4" height="4" viewBox="0 0 4 4"><path d="M4 0v4h-4z" fill="#2b62b5"/></svg>
<div class="t" style="top:128.5px;font-size:7.5px;color:#222;left:254.95px;transform:translateX(-50%);">项目编码</div>
<div class="t" style="top:128.5px;font-size:7.5px;color:#222;left:388.5px;transform:translateX(-50%);">项目名称</div>
<div class="t" style="top:125.19999999999999px;font-size:7.5px;color:#222;left:482px;transform:translateX(-50%);letter-spacing:-0.400px;">人工费调</div>
<div class="t" style="top:132.5px;font-size:7.5px;color:#222;left:480.5px;transform:translateX(-50%);">系数</div>
<div class="t" style="top:123.5px;font-size:7.5px;color:#222;left:550.5px;transform:translateX(-50%);">人工</div>
<div class="t" style="top:123.5px;font-size:7.5px;color:#222;left:652.25px;transform:translateX(-50%);">材料</div>
<div class="t" style="top:123.5px;font-size:7.5px;color:#222;left:754.25px;transform:translateX(-50%);">机械</div>
<div class="t" style="top:123.5px;font-size:7.5px;color:#222;left:845.25px;transform:translateX(-50%);">综合费</div>
<div class="t" style="top:134.3px;font-size:7.5px;color:#222;left:524.75px;transform:translateX(-50%);">单价</div>
<div class="t" style="top:134.3px;font-size:7.5px;color:#222;left:575.75px;transform:translateX(-50%);">合价</div>
<div class="t" style="top:134.3px;font-size:7.5px;color:#222;left:626.75px;transform:translateX(-50%);">单价</div>
<div class="t" style="top:134.3px;font-size:7.5px;color:#222;left:677.5px;transform:translateX(-50%);">合价</div>
<div class="t" style="top:134.3px;font-size:7.5px;color:#222;left:728.75px;transform:translateX(-50%);">单价</div>
<div class="t" style="top:134.3px;font-size:7.5px;color:#222;left:780.0px;transform:translateX(-50%);">合价</div>
<div class="t" style="top:134.3px;font-size:7.5px;color:#222;left:826.0px;transform:translateX(-50%);">单价</div>
<div class="t" style="top:134.3px;font-size:7.5px;color:#222;left:865.75px;transform:translateX(-50%);">合价</div>
<svg style="left:187px;top:148px" width="8" height="7" viewBox="0 0 8 7"><path d="M0 0h5.500l-2 2.500v4l-1.500-1v-3z" fill="#2b62b5"/><rect x="5.800" y="3" width="2" height="2" fill="#e02020"/></svg>
<svg style="left:302.3px;top:148.5px" width="7.4" height="7.2" viewBox="0 0 7.4 7.2"><rect x="0.400" y="0.400" width="6.600" height="6.400" fill="#fffef2" stroke="#cfccb0" stroke-width="0.800"/><path d="M2 3.600h3.400" stroke="#a8a690" stroke-width="0.800"/></svg>
<svg style="left:456.3px;top:148.5px" width="7.4" height="7.2" viewBox="0 0 7.4 7.2"><rect x="0.400" y="0.400" width="6.600" height="6.400" fill="#fffef2" stroke="#cfccb0" stroke-width="0.800"/><path d="M2 3.600h3.400" stroke="#a8a690" stroke-width="0.800"/></svg>
<svg style="left:540.8px;top:148.5px" width="7.4" height="7.2" viewBox="0 0 7.4 7.2"><rect x="0.400" y="0.400" width="6.600" height="6.400" fill="#fffef2" stroke="#cfccb0" stroke-width="0.800"/><path d="M2 3.600h3.400" stroke="#a8a690" stroke-width="0.800"/></svg>
<svg style="left:592.3px;top:148.5px" width="7.4" height="7.2" viewBox="0 0 7.4 7.2"><rect x="0.400" y="0.400" width="6.600" height="6.400" fill="#fffef2" stroke="#cfccb0" stroke-width="0.800"/><path d="M2 3.600h3.400" stroke="#a8a690" stroke-width="0.800"/></svg>
<svg style="left:642.8px;top:148.5px" width="7.4" height="7.2" viewBox="0 0 7.4 7.2"><rect x="0.400" y="0.400" width="6.600" height="6.400" fill="#fffef2" stroke="#cfccb0" stroke-width="0.800"/><path d="M2 3.600h3.400" stroke="#a8a690" stroke-width="0.800"/></svg>
<svg style="left:693.8px;top:148.5px" width="7.4" height="7.2" viewBox="0 0 7.4 7.2"><rect x="0.400" y="0.400" width="6.600" height="6.400" fill="#fffef2" stroke="#cfccb0" stroke-width="0.800"/><path d="M2 3.600h3.400" stroke="#a8a690" stroke-width="0.800"/></svg>
<svg style="left:745.3px;top:148.5px" width="7.4" height="7.2" viewBox="0 0 7.4 7.2"><rect x="0.400" y="0.400" width="6.600" height="6.400" fill="#fffef2" stroke="#cfccb0" stroke-width="0.800"/><path d="M2 3.600h3.400" stroke="#a8a690" stroke-width="0.800"/></svg>
<svg style="left:796.3px;top:148.5px" width="7.4" height="7.2" viewBox="0 0 7.4 7.2"><rect x="0.400" y="0.400" width="6.600" height="6.400" fill="#fffef2" stroke="#cfccb0" stroke-width="0.800"/><path d="M2 3.600h3.400" stroke="#a8a690" stroke-width="0.800"/></svg>
<svg style="left:837.3px;top:148.5px" width="7.4" height="7.2" viewBox="0 0 7.4 7.2"><rect x="0.400" y="0.400" width="6.600" height="6.400" fill="#fffef2" stroke="#cfccb0" stroke-width="0.800"/><path d="M2 3.600h3.400" stroke="#a8a690" stroke-width="0.800"/></svg>
<svg style="left:876.3px;top:148.5px" width="7.4" height="7.2" viewBox="0 0 7.4 7.2"><rect x="0.400" y="0.400" width="6.600" height="6.400" fill="#fffef2" stroke="#cfccb0" stroke-width="0.800"/><path d="M2 3.600h3.400" stroke="#a8a690" stroke-width="0.800"/></svg>
<div style="left:198.4px;top:157.6px;width:267.1px;height:12.650000000000016px;background:#f8f5fc;"></div>
<div style="left:183.5px;top:157.6px;width:14.900000000000006px;height:11.950000000000017px;background:#f3f3f3;border-right:1px solid #cfcfcf;border-bottom:1px solid #cfcfcf;"></div>
<div style="left:198.4px;top:169.55px;width:686.6px;height:12.649999999999988px;background:#f3e8fd;"></div>
<div style="left:183.5px;top:169.55px;width:14.900000000000006px;height:11.949999999999989px;background:#f3f3f3;border-right:1px solid #cfcfcf;border-bottom:1px solid #cfcfcf;"></div>
<div class="t s" style="top:169.525px;font-size:7.5px;color:#222;left:185.5px;">3</div>
<svg style="left:224.25px;top:173.275px" width="5.5" height="5.5" viewBox="0 0 5.5 5.5"><rect x="0.400" y="0.400" width="4.700" height="4.700" fill="#fff" stroke="#8ea3c4" stroke-width="0.800"/><path d="M1.300 2.750h2.900" stroke="#2b5fb0" stroke-width="0.900"/><path d="M2.750 1.300v2.900" stroke="#2b5fb0" stroke-width="0.900"/></svg>
<svg style="left:233px;top:171.725px" width="10" height="9" viewBox="0 0 10 9"><rect x="0" y="0" width="10" height="9" rx="1.500" fill="#7a4db3"/><path d="M2 2l1 1M1.800 4.300l1 .800M1.800 7.700l1.500-2M5 2h3.500M4.500 3.500h4.500M5 5h3.500v2.700h-3.500zM6.700 1v4" stroke="#fff" stroke-width="0.800" fill="none"/></svg>
<div class="t s" style="top:169.525px;font-size:7.5px;color:#222;left:245px;">010101004003</div>
<div class="t s" style="top:169.525px;font-size:7.5px;color:#111;left:313.5px;">挖基坑土方</div>
<div class="t s" style="top:169.525px;font-size:7.5px;color:#222;left:547.7px;transform:translateX(-100%);letter-spacing:0.300px;margin-left:0.300px;">17.27</div>
<div class="t s" style="top:169.525px;font-size:7.5px;color:#222;left:599.2px;transform:translateX(-100%);letter-spacing:0.300px;margin-left:0.300px;">6232.10</div>
<div class="t s" style="top:169.525px;font-size:7.5px;color:#222;left:844.2px;transform:translateX(-100%);letter-spacing:0.300px;margin-left:0.300px;">1.99</div>
<div class="t s" style="top:169.525px;font-size:7.5px;color:#222;left:884.5px;transform:translateX(-100%);letter-spacing:0.300px;margin-left:0.300px;">721.57</div>
<div style="left:198.4px;top:181.5px;width:686.6px;height:12.649999999999988px;background:#f3e8fd;"></div>
<div style="left:183.5px;top:181.5px;width:14.900000000000006px;height:11.949999999999989px;background:#f3f3f3;border-right:1px solid #cfcfcf;border-bottom:1px solid #cfcfcf;"></div>
<div class="t s" style="top:181.475px;font-size:7.5px;color:#222;left:185.5px;">4</div>
<svg style="left:224.25px;top:185.225px" width="5.5" height="5.5" viewBox="0 0 5.5 5.5"><rect x="0.400" y="0.400" width="4.700" height="4.700" fill="#fff" stroke="#8ea3c4" stroke-width="0.800"/><path d="M1.300 2.750h2.900" stroke="#2b5fb0" stroke-width="0.900"/><path d="M2.750 1.300v2.900" stroke="#2b5fb0" stroke-width="0.900"/></svg>
<svg style="left:233px;top:183.67499999999998px" width="10" height="9" viewBox="0 0 10 9"><rect x="0" y="0" width="10" height="9" rx="1.500" fill="#7a4db3"/><path d="M2 2l1 1M1.800 4.300l1 .800M1.800 7.700l1.500-2M5 2h3.500M4.500 3.500h4.500M5 5h3.500v2.700h-3.500zM6.700 1v4" stroke="#fff" stroke-width="0.800" fill="none"/></svg>
<div class="t s" style="top:181.475px;font-size:7.5px;color:#222;left:245px;">010103001004</div>
<div class="t s" style="top:181.475px;font-size:7.5px;color:#111;left:313.5px;">回填方</div>
<div class="t s" style="top:181.475px;font-size:7.5px;color:#222;left:547.7px;transform:translateX(-100%);letter-spacing:0.300px;margin-left:0.300px;">1.24</div>
<div class="t s" style="top:181.475px;font-size:7.5px;color:#222;left:599.2px;transform:translateX(-100%);letter-spacing:0.300px;margin-left:0.300px;">5777.73</div>
<div class="t s" style="top:181.475px;font-size:7.5px;color:#222;left:752.2px;transform:translateX(-100%);letter-spacing:0.300px;margin-left:0.300px;">4.46</div>
<div class="t s" style="top:181.475px;font-size:7.5px;color:#222;left:803.2px;transform:translateX(-100%);letter-spacing:0.300px;margin-left:0.300px;">20781.10</div>
<div class="t s" style="top:181.475px;font-size:7.5px;color:#222;left:844.2px;transform:translateX(-100%);letter-spacing:0.300px;margin-left:0.300px;">0.68</div>
<div class="t s" style="top:181.475px;font-size:7.5px;color:#222;left:884.5px;transform:translateX(-100%);letter-spacing:0.300px;margin-left:0.300px;">3168.43</div>
<div style="left:198.4px;top:193.45px;width:686.6px;height:12.650000000000016px;background:#f3e8fd;"></div>
<div style="left:183.5px;top:193.45px;width:14.900000000000006px;height:11.950000000000017px;background:#f3f3f3;border-right:1px solid #cfcfcf;border-bottom:1px solid #cfcfcf;"></div>
<div class="t s" style="top:193.425px;font-size:7.5px;color:#222;left:185.5px;">5</div>
<svg style="left:224.25px;top:197.175px" width="5.5" height="5.5" viewBox="0 0 5.5 5.5"><rect x="0.400" y="0.400" width="4.700" height="4.700" fill="#fff" stroke="#8ea3c4" stroke-width="0.800"/><path d="M1.300 2.750h2.900" stroke="#2b5fb0" stroke-width="0.900"/><path d="M2.750 1.300v2.900" stroke="#2b5fb0" stroke-width="0.900"/></svg>
<svg style="left:233px;top:195.625px" width="10" height="9" viewBox="0 0 10 9"><rect x="0" y="0" width="10" height="9" rx="1.500" fill="#7a4db3"/><path d="M2 2l1 1M1.800 4.300l1 .800M1.800 7.700l1.500-2M5 2h3.500M4.500 3.500h4.500M5 5h3.500v2.700h-3.500zM6.700 1v4" stroke="#fff" stroke-width="0.800" fill="none"/></svg>
<div class="t s" style="top:193.425px;font-size:7.5px;color:#222;left:245px;">010103002005</div>
<div class="t s" style="top:193.425px;font-size:7.5px;color:#111;left:313.5px;">余方弃置</div>
<div class="t s" style="top:193.425px;font-size:7.5px;color:#222;left:547.7px;transform:translateX(-100%);letter-spacing:0.300px;margin-left:0.300px;">1.02</div>
<div class="t s" style="top:193.425px;font-size:7.5px;color:#222;left:599.2px;transform:translateX(-100%);letter-spacing:0.300px;margin-left:0.300px;">730.26</div>
<div class="t s" style="top:193.425px;font-size:7.5px;color:#222;left:649.7px;transform:translateX(-100%);letter-spacing:0.300px;margin-left:0.300px;">0.04</div>
<div class="t s" style="top:193.425px;font-size:7.5px;color:#222;left:700.7px;transform:translateX(-100%);letter-spacing:0.300px;margin-left:0.300px;">29.81</div>
<div class="t s" style="top:193.425px;font-size:7.5px;color:#222;left:752.2px;transform:translateX(-100%);letter-spacing:0.300px;margin-left:0.300px;">6.14</div>
<div class="t s" style="top:193.425px;font-size:7.5px;color:#222;left:803.2px;transform:translateX(-100%);letter-spacing:0.300px;margin-left:0.300px;">4576.45</div>
<div class="t s" style="top:193.425px;font-size:7.5px;color:#222;left:844.2px;transform:translateX(-100%);letter-spacing:0.300px;margin-left:0.300px;">0.85</div>
<div class="t s" style="top:193.425px;font-size:7.5px;color:#222;left:884.5px;transform:translateX(-100%);letter-spacing:0.300px;margin-left:0.300px;">633.55</div>
<div style="left:198.4px;top:205.4px;width:686.6px;height:12.649999999999988px;background:#d9f9fa;"></div>
<div style="left:183.5px;top:205.4px;width:14.900000000000006px;height:11.949999999999989px;background:#f3f3f3;border-right:1px solid #cfcfcf;border-bottom:1px solid #cfcfcf;"></div>
<svg style="left:212.5px;top:208.375px" width="6" height="6" viewBox="0 0 6 6"><rect x="0.500" y="0.500" width="5" height="5" fill="#fff" stroke="#888" stroke-width="0.800"/></svg>
<div class="t s" style="top:205.375px;font-size:7.5px;color:#222;left:223px;">0102</div>
<div class="t s" style="top:205.375px;font-size:7.5px;color:#111;left:313.5px;">地基处理与边坡支护工程</div>
<div class="t s" style="top:205.375px;font-size:7.5px;color:#222;left:599.2px;transform:translateX(-100%);letter-spacing:0.300px;margin-left:0.300px;">118407.36</div>
<div class="t s" style="top:205.375px;font-size:7.5px;color:#222;left:700.7px;transform:translateX(-100%);letter-spacing:0.300px;margin-left:0.300px;">994323.98</div>
<div class="t s" style="top:205.375px;font-size:7.5px;color:#222;left:803.2px;transform:translateX(-100%);letter-spacing:0.300px;margin-left:0.300px;">38038.66</div>
<div class="t s" style="top:205.375px;font-size:7.5px;color:#222;left:884.5px;transform:translateX(-100%);letter-spacing:0.300px;margin-left:0.300px;">34542.67</div>
<div style="left:198.4px;top:217.35px;width:686.6px;height:12.650000000000016px;background:#f3e8fd;"></div>
<div style="left:183.5px;top:217.35px;width:14.900000000000006px;height:11.950000000000017px;background:#f3f3f3;border-right:1px solid #cfcfcf;border-bottom:1px solid #cfcfcf;"></div>
<div class="t s" style="top:217.325px;font-size:7.5px;color:#222;left:185.5px;">6</div>
<svg style="left:224.25px;top:221.075px" width="5.5" height="5.5" viewBox="0 0 5.5 5.5"><rect x="0.400" y="0.400" width="4.700" height="4.700" fill="#fff" stroke="#8ea3c4" stroke-width="0.800"/><path d="M1.300 2.750h2.900" stroke="#2b5fb0" stroke-width="0.900"/></svg>
<svg style="left:233px;top:219.52499999999998px" width="10" height="9" viewBox="0 0 10 9"><rect x="0" y="0" width="10" height="9" rx="1.500" fill="#7a4db3"/><path d="M2 2l1 1M1.800 4.300l1 .800M1.800 7.700l1.500-2M5 2h3.500M4.500 3.500h4.500M5 5h3.500v2.700h-3.500zM6.700 1v4" stroke="#fff" stroke-width="0.800" fill="none"/></svg>
<div class="t s" style="top:217.325px;font-size:7.5px;color:#222;left:245px;">010201008006</div>
<div class="t s" style="top:217.325px;font-size:7.5px;color:#111;left:313.5px;">CFG桩</div>
<div class="t s" style="top:217.325px;font-size:7.5px;color:#222;left:547.7px;transform:translateX(-100%);letter-spacing:0.300px;margin-left:0.300px;">34.60</div>
<div class="t s" style="top:217.325px;font-size:7.5px;color:#222;left:599.2px;transform:translateX(-100%);letter-spacing:0.300px;margin-left:0.300px;">114447.12</div>
<div class="t s" style="top:217.325px;font-size:7.5px;color:#222;left:649.7px;transform:translateX(-100%);letter-spacing:0.300px;margin-left:0.300px;">299.00</div>
<div class="t s" style="top:217.325px;font-size:7.5px;color:#222;left:700.7px;transform:translateX(-100%);letter-spacing:0.300px;margin-left:0.300px;">988530.60</div>
<div class="t s" style="top:217.325px;font-size:7.5px;color:#222;left:752.2px;transform:translateX(-100%);letter-spacing:0.300px;margin-left:0.300px;">11.46</div>
<div class="t s" style="top:217.325px;font-size:7.5px;color:#222;left:803.2px;transform:translateX(-100%);letter-spacing:0.300px;margin-left:0.300px;">37636.92</div>
<div class="t s" style="top:217.325px;font-size:7.5px;color:#222;left:844.2px;transform:translateX(-100%);letter-spacing:0.300px;margin-left:0.300px;">10.35</div>
<div class="t s" style="top:217.325px;font-size:7.5px;color:#222;left:884.5px;transform:translateX(-100%);letter-spacing:0.300px;margin-left:0.300px;">34045.23</div>
<div style="left:198.4px;top:229.3px;width:686.6px;height:21.599999999999977px;background:#fff;"></div>
<div style="left:183.5px;top:229.3px;width:14.900000000000006px;height:20.899999999999977px;background:#f3f3f3;border-right:1px solid #cfcfcf;border-bottom:1px solid #cfcfcf;"></div>
<svg style="left:235.75px;top:237.5px" width="5.5" height="5.5" viewBox="0 0 5.5 5.5"><rect x="0.400" y="0.400" width="4.700" height="4.700" fill="#fff" stroke="#8ea3c4" stroke-width="0.800"/><path d="M1.300 2.750h2.900" stroke="#2b5fb0" stroke-width="0.900"/><path d="M2.750 1.300v2.900" stroke="#2b5fb0" stroke-width="0.900"/></svg>
<div class="t s" style="top:233.75px;font-size:7.5px;color:#111;left:245.5px;letter-spacing:-0.450px;">AE0043</div>
<div class="t s" style="top:229.8px;font-size:7.5px;color:#222;left:313.5px;">水泥粉煤灰碎石桩 混凝土灌注 沉管灌注成</div>
<div class="t s" style="top:237.3px;font-size:7.5px;color:#222;left:313.5px;">孔, 商品混凝土</div>
<div class="t s" style="top:233.75px;font-size:7.5px;color:#222;left:547.7px;transform:translateX(-100%);letter-spacing:0.300px;margin-left:0.300px;">346.00</div>
<div class="t s" style="top:233.75px;font-size:7.5px;color:#222;left:599.2px;transform:translateX(-100%);letter-spacing:0.300px;margin-left:0.300px;">114447.12</div>
<div class="t s" style="top:233.75px;font-size:7.5px;color:#222;left:649.7px;transform:translateX(-100%);letter-spacing:0.300px;margin-left:0.300px;">2990.00</div>
<div class="t s" style="top:233.75px;font-size:7.5px;color:#222;left:700.7px;transform:translateX(-100%);letter-spacing:0.300px;margin-left:0.300px;">988530.60</div>
<div class="t s" style="top:233.75px;font-size:7.5px;color:#222;left:752.2px;transform:translateX(-100%);letter-spacing:0.300px;margin-left:0.300px;">114.63</div>
<div class="t s" style="top:233.75px;font-size:7.5px;color:#222;left:803.2px;transform:translateX(-100%);letter-spacing:0.300px;margin-left:0.300px;">37704.93</div>
<div class="t s" style="top:233.75px;font-size:7.5px;color:#222;left:844.2px;transform:translateX(-100%);letter-spacing:0.300px;margin-left:0.300px;">103.53</div>
<div class="t s" style="top:233.75px;font-size:7.5px;color:#222;left:884.5px;transform:translateX(-100%);letter-spacing:0.300px;margin-left:0.300px;">34255.13</div>
<div style="left:198.4px;top:250.2px;width:267.1px;height:12.649999999999988px;background:#f8f5fc;"></div>
<div style="left:183.5px;top:250.2px;width:14.900000000000006px;height:11.949999999999989px;background:#f3f3f3;border-right:1px solid #cfcfcf;border-bottom:1px solid #cfcfcf;"></div>
<div style="left:198.4px;top:262.15px;width:686.6px;height:12.650000000000045px;background:#f3e8fd;"></div>
<div style="left:183.5px;top:262.15px;width:14.900000000000006px;height:11.950000000000045px;background:#f3f3f3;border-right:1px solid #cfcfcf;border-bottom:1px solid #cfcfcf;"></div>
<div class="t s" style="top:262.125px;font-size:7.5px;color:#222;left:185.5px;">7</div>
<svg style="left:224.25px;top:265.875px" width="5.5" height="5.5" viewBox="0 0 5.5 5.5"><rect x="0.400" y="0.400" width="4.700" height="4.700" fill="#fff" stroke="#8ea3c4" stroke-width="0.800"/><path d="M1.300 2.750h2.900" stroke="#2b5fb0" stroke-width="0.900"/><path d="M2.750 1.300v2.900" stroke="#2b5fb0" stroke-width="0.900"/></svg>
<svg style="left:233px;top:264.325px" width="10" height="9" viewBox="0 0 10 9"><rect x="0" y="0" width="10" height="9" rx="1.500" fill="#7a4db3"/><path d="M2 2l1 1M1.800 4.300l1 .800M1.800 7.700l1.500-2M5 2h3.500M4.500 3.500h4.500M5 5h3.500v2.700h-3.500zM6.700 1v4" stroke="#fff" stroke-width="0.800" fill="none"/></svg>
<div class="t s" style="top:262.125px;font-size:7.5px;color:#222;left:245px;">010201017007</div>
<div class="t s" style="top:262.125px;font-size:7.5px;color:#111;left:313.5px;">褥垫层</div>
<div class="t s" style="top:262.125px;font-size:7.5px;color:#222;left:547.7px;transform:translateX(-100%);letter-spacing:0.300px;margin-left:0.300px;">21.66</div>
<div class="t s" style="top:262.125px;font-size:7.5px;color:#222;left:599.2px;transform:translateX(-100%);letter-spacing:0.300px;margin-left:0.300px;">3996.24</div>
<div class="t s" style="top:262.125px;font-size:7.5px;color:#222;left:649.7px;transform:translateX(-100%);letter-spacing:0.300px;margin-left:0.300px;">69.14</div>
<div class="t s" style="top:262.125px;font-size:7.5px;color:#222;left:700.7px;transform:translateX(-100%);letter-spacing:0.300px;margin-left:0.300px;">10793.38</div>
<div class="t s" style="top:262.125px;font-size:7.5px;color:#222;left:752.2px;transform:translateX(-100%);letter-spacing:0.300px;margin-left:0.300px;">2.16</div>
<div class="t s" style="top:262.125px;font-size:7.5px;color:#222;left:803.2px;transform:translateX(-100%);letter-spacing:0.300px;margin-left:0.300px;">342.14</div>
<div class="t s" style="top:262.125px;font-size:7.5px;color:#222;left:844.2px;transform:translateX(-100%);letter-spacing:0.300px;margin-left:0.300px;">3.14</div>
<div class="t s" style="top:262.125px;font-size:7.5px;color:#222;left:884.5px;transform:translateX(-100%);letter-spacing:0.300px;margin-left:0.300px;">497.38</div>
<div style="left:198.4px;top:274.1px;width:686.6px;height:12.649999999999988px;background:#d9f9fa;"></div>
<div style="left:183.5px;top:274.1px;width:14.900000000000006px;height:11.949999999999989px;background:#f3f3f3;border-right:1px solid #cfcfcf;border-bottom:1px solid #cfcfcf;"></div>
<svg style="left:212.75px;top:277.82500000000005px" width="5.5" height="5.5" viewBox="0 0 5.5 5.5"><rect x="0.400" y="0.400" width="4.700" height="4.700" fill="#fff" stroke="#8ea3c4" stroke-width="0.800"/><path d="M1.300 2.750h2.900" stroke="#2b5fb0" stroke-width="0.900"/><path d="M2.750 1.300v2.900" stroke="#2b5fb0" stroke-width="0.900"/></svg>
<div class="t s" style="top:274.07500000000005px;font-size:7.5px;color:#222;left:223px;">0104</div>
<div class="t s" style="top:274.07500000000005px;font-size:7.5px;color:#111;left:313.5px;">砌筑工程</div>
<div class="t s" style="top:274.07500000000005px;font-size:7.5px;color:#222;left:599.2px;transform:translateX(-100%);letter-spacing:0.300px;margin-left:0.300px;">25840.23</div>
<div class="t s" style="top:274.07500000000005px;font-size:7.5px;color:#222;left:700.7px;transform:translateX(-100%);letter-spacing:0.300px;margin-left:0.300px;">68395.07</div>
<div class="t s" style="top:274.07500000000005px;font-size:7.5px;color:#222;left:803.2px;transform:translateX(-100%);letter-spacing:0.300px;margin-left:0.300px;">1601.67</div>
<div class="t s" style="top:274.07500000000005px;font-size:7.5px;color:#222;left:884.5px;transform:translateX(-100%);letter-spacing:0.300px;margin-left:0.300px;">4698.92</div>
<div style="left:198.4px;top:286.05px;width:686.6px;height:12.649999999999988px;background:#f3e8fd;"></div>
<div style="left:183.5px;top:286.05px;width:14.900000000000006px;height:11.949999999999989px;background:#f3f3f3;border-right:1px solid #cfcfcf;border-bottom:1px solid #cfcfcf;"></div>
<div class="t s" style="top:286.025px;font-size:7.5px;color:#222;left:185.5px;">8</div>
<svg style="left:224.25px;top:289.775px" width="5.5" height="5.5" viewBox="0 0 5.5 5.5"><rect x="0.400" y="0.400" width="4.700" height="4.700" fill="#fff" stroke="#8ea3c4" stroke-width="0.800"/><path d="M1.300 2.750h2.900" stroke="#2b5fb0" stroke-width="0.900"/><path d="M2.750 1.300v2.900" stroke="#2b5fb0" stroke-width="0.900"/></svg>
<svg style="left:233px;top:288.22499999999997px" width="10" height="9" viewBox="0 0 10 9"><rect x="0" y="0" width="10" height="9" rx="1.500" fill="#7a4db3"/><path d="M2 2l1 1M1.800 4.300l1 .800M1.800 7.700l1.500-2M5 2h3.500M4.500 3.500h4.500M5 5h3.500v2.700h-3.500zM6.700 1v4" stroke="#fff" stroke-width="0.800" fill="none"/></svg>
<div class="t s" style="top:286.025px;font-size:7.5px;color:#222;left:245px;">010401001008</div>
<div class="t s" style="top:286.025px;font-size:7.5px;color:#111;left:313.5px;">砖基础</div>
<div class="t s" style="top:286.025px;font-size:7.5px;color:#222;left:547.7px;transform:translateX(-100%);letter-spacing:0.300px;margin-left:0.300px;">94.77</div>
<div class="t s" style="top:286.025px;font-size:7.5px;color:#222;left:599.2px;transform:translateX(-100%);letter-spacing:0.300px;margin-left:0.300px;">14977.45</div>
<div class="t s" style="top:286.025px;font-size:7.5px;color:#222;left:649.7px;transform:translateX(-100%);letter-spacing:0.300px;margin-left:0.300px;">293.96</div>
<div class="t s" style="top:286.025px;font-size:7.5px;color:#222;left:700.7px;transform:translateX(-100%);letter-spacing:0.300px;margin-left:0.300px;">46457.44</div>
<div class="t s" style="top:286.025px;font-size:7.5px;color:#222;left:844.2px;transform:translateX(-100%);letter-spacing:0.300px;margin-left:0.300px;">15.42</div>
<div class="t s" style="top:286.025px;font-size:7.5px;color:#222;left:884.5px;transform:translateX(-100%);letter-spacing:0.300px;margin-left:0.300px;">2436.93</div>
<div style="left:198.4px;top:298.0px;width:686.6px;height:12.649999999999988px;background:#f3e8fd;"></div>
<div style="left:183.5px;top:298.0px;width:14.900000000000006px;height:11.949999999999989px;background:#f3f3f3;border-right:1px solid #cfcfcf;border-bottom:1px solid #cfcfcf;"></div>
<div class="t s" style="top:297.975px;font-size:7.5px;color:#222;left:185.5px;">9</div>
<svg style="left:224.25px;top:301.725px" width="5.5" height="5.5" viewBox="0 0 5.5 5.5"><rect x="0.400" y="0.400" width="4.700" height="4.700" fill="#fff" stroke="#8ea3c4" stroke-width="0.800"/><path d="M1.300 2.750h2.900" stroke="#2b5fb0" stroke-width="0.900"/></svg>
<svg style="left:233px;top:300.175px" width="10" height="9" viewBox="0 0 10 9"><rect x="0" y="0" width="10" height="9" rx="1.500" fill="#7a4db3"/><path d="M2 2l1 1M1.800 4.300l1 .800M1.800 7.700l1.500-2M5 2h3.500M4.500 3.500h4.500M5 5h3.500v2.700h-3.500zM6.700 1v4" stroke="#fff" stroke-width="0.800" fill="none"/></svg>
<div class="t s" style="top:297.975px;font-size:7.5px;color:#222;left:245px;">010401003009</div>
<div class="t s" style="top:297.975px;font-size:7.5px;color:#111;left:313.5px;">实心砖墙</div>
<div class="t s" style="top:297.975px;font-size:7.5px;color:#222;left:547.7px;transform:translateX(-100%);letter-spacing:0.300px;margin-left:0.300px;">123.72</div>
<div class="t s" style="top:297.975px;font-size:7.5px;color:#222;left:599.2px;transform:translateX(-100%);letter-spacing:0.300px;margin-left:0.300px;">2142.00</div>
<div class="t s" style="top:297.975px;font-size:7.5px;color:#222;left:649.7px;transform:translateX(-100%);letter-spacing:0.300px;margin-left:0.300px;">290.12</div>
<div class="t s" style="top:297.975px;font-size:7.5px;color:#222;left:700.7px;transform:translateX(-100%);letter-spacing:0.300px;margin-left:0.300px;">5024.00</div>
<div class="t s" style="top:297.975px;font-size:7.5px;color:#222;left:844.2px;transform:translateX(-100%);letter-spacing:0.300px;margin-left:0.300px;">20.13</div>
<div class="t s" style="top:297.975px;font-size:7.5px;color:#222;left:884.5px;transform:translateX(-100%);letter-spacing:0.300px;margin-left:0.300px;">348.65</div>
<div style="left:198.4px;top:309.95px;width:686.6px;height:12.649999999999988px;background:#fff;"></div>
<div style="left:183.5px;top:309.95px;width:14.900000000000006px;height:11.949999999999989px;background:#f3f3f3;border-right:1px solid #cfcfcf;border-bottom:1px solid #cfcfcf;"></div>
<svg style="left:235.75px;top:313.67499999999995px" width="5.5" height="5.5" viewBox="0 0 5.5 5.5"><rect x="0.400" y="0.400" width="4.700" height="4.700" fill="#fff" stroke="#8ea3c4" stroke-width="0.800"/><path d="M1.300 2.750h2.900" stroke="#2b5fb0" stroke-width="0.900"/><path d="M2.750 1.300v2.900" stroke="#2b5fb0" stroke-width="0.900"/></svg>
<div style="left:241.5px;top:315.92499999999995px;width:3px;height:1px;background:#888;"></div>
<div class="t s b" style="top:309.92499999999995px;font-size:7.5px;color:#111;left:245.5px;letter-spacing:-0.450px;">AD0026换</div>
<div class="t s b" style="top:309.92499999999995px;font-size:7.5px;color:#111;left:313.5px;">砖墙 干混砂浆</div>
<div class="t s b" style="top:309.92499999999995px;font-size:7.5px;color:#111;left:547.7px;transform:translateX(-100%);letter-spacing:0.300px;margin-left:0.300px;">1237.18</div>
<div class="t s b" style="top:309.92499999999995px;font-size:7.5px;color:#111;left:599.2px;transform:translateX(-100%);letter-spacing:0.300px;margin-left:0.300px;">2142.00</div>
<div class="t s b" style="top:309.92499999999995px;font-size:7.5px;color:#111;left:649.7px;transform:translateX(-100%);letter-spacing:0.300px;margin-left:0.300px;">2901.24</div>
<div class="t s b" style="top:309.92499999999995px;font-size:7.5px;color:#111;left:700.7px;transform:translateX(-100%);letter-spacing:0.300px;margin-left:0.300px;">5024.94</div>
<div class="t s b" style="top:309.92499999999995px;font-size:7.5px;color:#111;left:844.2px;transform:translateX(-100%);letter-spacing:0.300px;margin-left:0.300px;">201.35</div>
<div class="t s b" style="top:309.92499999999995px;font-size:7.5px;color:#111;left:884.5px;transform:translateX(-100%);letter-spacing:0.300px;margin-left:0.300px;">348.73</div>
<div style="left:198.4px;top:321.9px;width:267.1px;height:12.650000000000045px;background:#f8f5fc;"></div>
<div style="left:183.5px;top:321.9px;width:14.900000000000006px;height:11.950000000000045px;background:#f3f3f3;border-right:1px solid #cfcfcf;border-bottom:1px solid #cfcfcf;"></div>
<div class="t" style="top:321.875px;font-size:7.5px;color:#555;left:388.5px;transform:translateX(-50%);font-style:italic;">此行输入定额或清单</div>
<div style="left:198.4px;top:333.85px;width:686.6px;height:12.649999999999988px;background:#f3e8fd;"></div>
<div style="left:183.5px;top:333.85px;width:14.900000000000006px;height:11.949999999999989px;background:#f3f3f3;border-right:1px solid #cfcfcf;border-bottom:1px solid #cfcfcf;"></div>
<div class="t s" style="top:333.82500000000005px;font-size:7.5px;color:#222;left:185.5px;">10</div>
<svg style="left:224.25px;top:337.57500000000005px" width="5.5" height="5.5" viewBox="0 0 5.5 5.5"><rect x="0.400" y="0.400" width="4.700" height="4.700" fill="#fff" stroke="#8ea3c4" stroke-width="0.800"/><path d="M1.300 2.750h2.900" stroke="#2b5fb0" stroke-width="0.900"/></svg>
<svg style="left:233px;top:336.02500000000003px" width="10" height="9" viewBox="0 0 10 9"><rect x="0" y="0" width="10" height="9" rx="1.500" fill="#7a4db3"/><path d="M2 2l1 1M1.800 4.300l1 .800M1.800 7.700l1.500-2M5 2h3.500M4.500 3.500h4.500M5 5h3.500v2.700h-3.500zM6.700 1v4" stroke="#fff" stroke-width="0.800" fill="none"/></svg>
<div class="t s" style="top:333.82500000000005px;font-size:7.5px;color:#222;left:245px;">010401012010</div>
<div class="t s" style="top:333.82500000000005px;font-size:7.5px;color:#111;left:313.5px;">坡道、台阶踏面</div>
<div class="t s" style="top:333.82500000000005px;font-size:7.5px;color:#222;left:547.7px;transform:translateX(-100%);letter-spacing:0.300px;margin-left:0.300px;">169.57</div>
<div class="t s" style="top:333.82500000000005px;font-size:7.5px;color:#222;left:599.2px;transform:translateX(-100%);letter-spacing:0.300px;margin-left:0.300px;">670.20</div>
<div class="t s" style="top:333.82500000000005px;font-size:7.5px;color:#222;left:649.7px;transform:translateX(-100%);letter-spacing:0.300px;margin-left:0.300px;">292.20</div>
<div class="t s" style="top:333.82500000000005px;font-size:7.5px;color:#222;left:700.7px;transform:translateX(-100%);letter-spacing:0.300px;margin-left:0.300px;">1130.00</div>
<div class="t s" style="top:333.82500000000005px;font-size:7.5px;color:#222;left:844.2px;transform:translateX(-100%);letter-spacing:0.300px;margin-left:0.300px;">27.60</div>
<div class="t s" style="top:333.82500000000005px;font-size:7.5px;color:#222;left:884.5px;transform:translateX(-100%);letter-spacing:0.300px;margin-left:0.300px;">110.40</div>
<div style="left:198.4px;top:345.8px;width:686.6px;height:12.649999999999988px;background:#fff;"></div>
<div style="left:183.5px;top:345.8px;width:14.900000000000006px;height:11.949999999999989px;background:#f3f3f3;border-right:1px solid #cfcfcf;border-bottom:1px solid #cfcfcf;"></div>
<svg style="left:235.75px;top:349.525px" width="5.5" height="5.5" viewBox="0 0 5.5 5.5"><rect x="0.400" y="0.400" width="4.700" height="4.700" fill="#fff" stroke="#8ea3c4" stroke-width="0.800"/><path d="M1.300 2.750h2.900" stroke="#2b5fb0" stroke-width="0.900"/><path d="M2.750 1.300v2.900" stroke="#2b5fb0" stroke-width="0.900"/></svg>
<div style="left:241.5px;top:351.775px;width:3px;height:1px;background:#888;"></div>
<div class="t s" style="top:345.775px;font-size:7.5px;color:#111;left:245.5px;letter-spacing:-0.450px;">AD0140换</div>
<div class="t s" style="top:345.775px;font-size:7.5px;color:#111;left:313.5px;">零星砌砖 干混砂浆</div>
<div class="t s" style="top:345.775px;font-size:7.5px;color:#222;left:547.7px;transform:translateX(-100%);letter-spacing:0.300px;margin-left:0.300px;">1695.70</div>
<div class="t s" style="top:345.775px;font-size:7.5px;color:#222;left:599.2px;transform:translateX(-100%);letter-spacing:0.300px;margin-left:0.300px;">670.20</div>
<div class="t s" style="top:345.775px;font-size:7.5px;color:#222;left:649.7px;transform:translateX(-100%);letter-spacing:0.300px;margin-left:0.300px;">2921.96</div>
<div class="t s" style="top:345.775px;font-size:7.5px;color:#222;left:700.7px;transform:translateX(-100%);letter-spacing:0.300px;margin-left:0.300px;">1130.70</div>
<div class="t s" style="top:345.775px;font-size:7.5px;color:#222;left:844.2px;transform:translateX(-100%);letter-spacing:0.300px;margin-left:0.300px;">275.97</div>
<div class="t s" style="top:345.775px;font-size:7.5px;color:#222;left:884.5px;transform:translateX(-100%);letter-spacing:0.300px;margin-left:0.300px;">110.39</div>
<div style="left:198.4px;top:357.75px;width:267.1px;height:12.649999999999988px;background:#f8f5fc;"></div>
<div style="left:183.5px;top:357.75px;width:14.900000000000006px;height:11.949999999999989px;background:#f3f3f3;border-right:1px solid #cfcfcf;border-bottom:1px solid #cfcfcf;"></div>
<div style="left:198.4px;top:369.7px;width:686.6px;height:12.649999999999988px;background:#f3e8fd;"></div>
<div style="left:183.5px;top:369.7px;width:14.900000000000006px;height:11.949999999999989px;background:#f3f3f3;border-right:1px solid #cfcfcf;border-bottom:1px solid #cfcfcf;"></div>
<div class="t s" style="top:369.67499999999995px;font-size:7.5px;color:#222;left:185.5px;">11</div>
<svg style="left:224.25px;top:373.42499999999995px" width="5.5" height="5.5" viewBox="0 0 5.5 5.5"><rect x="0.400" y="0.400" width="4.700" height="4.700" fill="#fff" stroke="#8ea3c4" stroke-width="0.800"/><path d="M1.300 2.750h2.900" stroke="#2b5fb0" stroke-width="0.900"/></svg>
<svg style="left:233px;top:371.87499999999994px" width="10" height="9" viewBox="0 0 10 9"><rect x="0" y="0" width="10" height="9" rx="1.500" fill="#7a4db3"/><path d="M2 2l1 1M1.800 4.300l1 .800M1.800 7.700l1.500-2M5 2h3.500M4.500 3.500h4.500M5 5h3.500v2.700h-3.500zM6.700 1v4" stroke="#fff" stroke-width="0.800" fill="none"/></svg>
<div class="t s" style="top:369.67499999999995px;font-size:7.5px;color:#222;left:245px;">010401005011</div>
<div class="t s" style="top:369.67499999999995px;font-size:7.5px;color:#111;left:313.5px;">空心砖墙 MU3.5</div>
<div class="t s" style="top:369.67499999999995px;font-size:7.5px;color:#222;left:547.7px;transform:translateX(-100%);letter-spacing:0.300px;margin-left:0.300px;">106.59</div>
<div class="t s" style="top:369.67499999999995px;font-size:7.5px;color:#222;left:599.2px;transform:translateX(-100%);letter-spacing:0.300px;margin-left:0.300px;">8059.51</div>
<div class="t s" style="top:369.67499999999995px;font-size:7.5px;color:#222;left:649.7px;transform:translateX(-100%);letter-spacing:0.300px;margin-left:0.300px;">202.07</div>
<div class="t s" style="top:369.67499999999995px;font-size:7.5px;color:#222;left:700.7px;transform:translateX(-100%);letter-spacing:0.300px;margin-left:0.300px;">15236.08</div>
<div class="t s" style="top:369.67499999999995px;font-size:7.5px;color:#222;left:844.2px;transform:translateX(-100%);letter-spacing:0.300px;margin-left:0.300px;">17.40</div>
<div class="t s" style="top:369.67499999999995px;font-size:7.5px;color:#222;left:884.5px;transform:translateX(-100%);letter-spacing:0.300px;margin-left:0.300px;">1311.98</div>
<div style="left:198.4px;top:381.65px;width:686.6px;height:12.650000000000045px;background:#fff;"></div>
<div style="left:183.5px;top:381.65px;width:14.900000000000006px;height:11.950000000000045px;background:#f3f3f3;border-right:1px solid #cfcfcf;"></div>
<svg style="left:235.75px;top:385.375px" width="5.5" height="5.5" viewBox="0 0 5.5 5.5"><rect x="0.400" y="0.400" width="4.700" height="4.700" fill="#fff" stroke="#8ea3c4" stroke-width="0.800"/><path d="M1.300 2.750h2.900" stroke="#2b5fb0" stroke-width="0.900"/><path d="M2.750 1.300v2.900" stroke="#2b5fb0" stroke-width="0.900"/></svg>
<div style="left:241.5px;top:387.625px;width:3px;height:1px;background:#888;"></div>
<div class="t s" style="top:381.625px;font-size:7.5px;color:#111;left:245.5px;letter-spacing:-0.450px;">AD0068换</div>
<div class="t s" style="top:381.625px;font-size:7.5px;color:#111;left:313.5px;"> 干混砂浆 MU3.5页岩空心砖</div>
<div class="t s" style="top:381.625px;font-size:7.5px;color:#222;left:547.7px;transform:translateX(-100%);letter-spacing:0.300px;margin-left:0.300px;">1065.88</div>
<div class="t s" style="top:381.625px;font-size:7.5px;color:#222;left:599.2px;transform:translateX(-100%);letter-spacing:0.300px;margin-left:0.300px;">8059.38</div>
<div class="t s" style="top:381.625px;font-size:7.5px;color:#222;left:649.7px;transform:translateX(-100%);letter-spacing:0.300px;margin-left:0.300px;">2020.71</div>
<div class="t s" style="top:381.625px;font-size:7.5px;color:#222;left:700.7px;transform:translateX(-100%);letter-spacing:0.300px;margin-left:0.300px;">15236.13</div>
<div class="t s" style="top:381.625px;font-size:7.5px;color:#222;left:844.2px;transform:translateX(-100%);letter-spacing:0.300px;margin-left:0.300px;">173.98</div>
<div class="t s" style="top:381.625px;font-size:7.5px;color:#222;left:884.5px;transform:translateX(-100%);letter-spacing:0.300px;margin-left:0.300px;">1311.69</div>
<div style="left:198.4px;top:393.6px;width:267.1px;height:7.599999999999977px;background:#f8f5fc;"></div>
<div style="left:183.5px;top:393.6px;width:14.900000000000006px;height:6.899999999999977px;background:#f3f3f3;border-right:1px solid #cfcfcf;"></div>
<div style="left:311.5px;top:169.05px;width:573.5px;height:1px;background:#d6d4da;"></div>
<div style="left:311.5px;top:181.0px;width:573.5px;height:1px;background:#d6d4da;"></div>
<div style="left:311.5px;top:192.95px;width:573.5px;height:1px;background:#d6d4da;"></div>
<div style="left:311.5px;top:204.9px;width:573.5px;height:1px;background:#d6d4da;"></div>
<div style="left:311.5px;top:216.85px;width:573.5px;height:1px;background:#d6d4da;"></div>
<div style="left:311.5px;top:228.8px;width:573.5px;height:1px;background:#d6d4da;"></div>
<div style="left:311.5px;top:249.7px;width:573.5px;height:1px;background:#d6d4da;"></div>
<div style="left:311.5px;top:261.65px;width:573.5px;height:1px;background:#d6d4da;"></div>
<div style="left:311.5px;top:273.6px;width:573.5px;height:1px;background:#d6d4da;"></div>
<div style="left:311.5px;top:285.55px;width:573.5px;height:1px;background:#d6d4da;"></div>
<div style="left:311.5px;top:297.5px;width:573.5px;height:1px;background:#d6d4da;"></div>
<div style="left:311.5px;top:309.45px;width:573.5px;height:1px;background:#d6d4da;"></div>
<div style="left:311.5px;top:321.4px;width:573.5px;height:1px;background:#d6d4da;"></div>
<div style="left:311.5px;top:333.35px;width:573.5px;height:1px;background:#d6d4da;"></div>
<div style="left:311.5px;top:345.3px;width:573.5px;height:1px;background:#d6d4da;"></div>
<div style="left:311.5px;top:357.25px;width:573.5px;height:1px;background:#d6d4da;"></div>
<div style="left:311.5px;top:369.2px;width:573.5px;height:1px;background:#d6d4da;"></div>
<div style="left:311.5px;top:381.15px;width:573.5px;height:1px;background:#d6d4da;"></div>
<div style="left:311.5px;top:157.5px;width:1px;height:243px;background:#d2d2d2;"></div>
<div style="left:499.5px;top:157.5px;width:1px;height:243px;background:#d2d2d2;"></div>
<div style="left:550px;top:157.5px;width:1px;height:243px;background:#d2d2d2;"></div>
<div style="left:601.5px;top:157.5px;width:1px;height:243px;background:#d2d2d2;"></div>
<div style="left:703px;top:157.5px;width:1px;height:243px;background:#d2d2d2;"></div>
<div style="left:805.5px;top:157.5px;width:1px;height:243px;background:#d2d2d2;"></div>
<div style="left:846.5px;top:157.5px;width:1px;height:243px;background:#d2d2d2;"></div>
<div style="left:216px;top:159px;width:1px;height:120px;border-left:1px dotted #b0b0b0;"></div>
<div style="left:227px;top:159px;width:1px;height:40px;border-left:1px dotted #b0b0b0;"></div>
<div style="left:227px;top:217.5px;width:1px;height:50.5px;border-left:1px dotted #b0b0b0;"></div>
<div style="left:227px;top:286.5px;width:1px;height:112.5px;border-left:1px dotted #b0b0b0;"></div>
<div style="left:238.5px;top:229px;width:1px;height:8px;border-left:1px dotted #b0b0b0;"></div>
<div style="left:311px;top:309.7px;width:155.5px;height:12.6px;border:1.300px solid #2b62b5;background:#fff;"></div>
<div class="t s b" style="top:310.0px;font-size:7.5px;color:#111;left:313.5px;">砖墙 干混砂浆</div>
<div style="left:464.5px;top:321px;width:3.5px;height:3px;background:#2b62b5;"></div>
<div style="left:179.3px;top:314px;width:3.6px;height:4px;background:#ffd9c0;border:1.100px solid #f0661e;"></div>
<svg style="left:171.5px;top:328px" width="6.5" height="27.5" viewBox="0 0 6.5 27.5"><path d="M6.500 0h-3.500a3 3 0 0 0-3 3v21.500a3 3 0 0 0 3 3h3.500z" fill="#2ea25a"/><path d="M5.300 11.500v5l-3-2.500z" fill="#fff"/></svg>
<div style="left:885px;top:123.5px;width:10px;height:277px;background:#f0f0f0;"></div>
<svg style="left:887.5px;top:127px" width="5" height="4" viewBox="0 0 5 4"><path d="M0.500 3.500l2-2.500l2 2.500" stroke="#555" stroke-width="1" fill="none"/></svg>
<div style="left:886px;top:146px;width:9.3px;height:9.5px;background:#c6c6c6;"></div>
<svg style="left:887.5px;top:393.5px" width="5" height="4" viewBox="0 0 5 4"><path d="M0.500 0.500l2 2.500l2-2.500" stroke="#555" stroke-width="1" fill="none"/></svg>
<div style="left:895px;top:104px;width:1.3px;height:477px;background:#f4f4f8;"></div>
<div style="left:176px;top:400.5px;width:719px;height:10.5px;background:#f0f0f0;"></div>
<svg style="left:181.5px;top:403px" width="4" height="6" viewBox="0 0 4 6"><path d="M3.500 0.500l-3 2.500l3 2.500" stroke="#555" stroke-width="1" fill="none"/></svg>
<div style="left:582.5px;top:401.5px;width:10px;height:8.5px;background:#c8c8c8;"></div>
<svg style="left:877.5px;top:403px" width="4" height="6" viewBox="0 0 4 6"><path d="M0.500 0.500l3 2.500l-3 2.500" stroke="#555" stroke-width="1" fill="none"/></svg>
<div style="left:179px;top:410.9px;width:717px;height:2px;background:#23804d;"></div>
<div style="left:179px;top:412.8px;width:716px;height:15px;background:#f4f4f4;"></div>
<div style="left:179px;top:413.5px;width:62.5px;height:13px;border-right:1px solid #d4d4d4;"></div>
<div class="t" style="top:414.0px;font-size:7.5px;color:#222;left:207.25px;transform:translateX(-50%);">综合单价计算表</div>
<div style="left:241.5px;top:413.5px;width:61.5px;height:13px;border-right:1px solid #d4d4d4;"></div>
<div class="t" style="top:414.0px;font-size:7.5px;color:#222;left:272.25px;transform:translateX(-50%);">工程量计算式</div>
<div style="left:303px;top:412.5px;width:39px;height:13.3px;background:#26804d;"></div>
<div class="t" style="top:413.6px;font-size:7.5px;color:#fff;left:322.5px;transform:translateX(-50%);">定额换算</div>
<div style="left:342px;top:413.5px;width:36px;height:13px;border-right:1px solid #d4d4d4;"></div>
<div class="t" style="top:414.0px;font-size:7.5px;color:#222;left:364.0px;transform:translateX(-50%);">工料机</div>
<div style="left:378px;top:413.5px;width:83.5px;height:13px;border-right:1px solid #d4d4d4;"></div>
<div class="t" style="top:414.0px;font-size:7.5px;color:#222;left:421.25px;transform:translateX(-50%);">项目特征及工作内容</div>
<div style="left:461.5px;top:413.5px;width:81.5px;height:13px;border-right:1px solid #d4d4d4;"></div>
<div class="t" style="top:414.0px;font-size:7.5px;color:#222;left:503.55px;transform:translateX(-50%);">定额说明及工作内容</div>
<div style="left:543px;top:413.5px;width:53px;height:13px;border-right:1px solid #d4d4d4;"></div>
<div class="t" style="top:414.0px;font-size:7.5px;color:#222;left:570.5px;transform:translateX(-50%);">需评审材料</div>
<svg style="left:521px;top:411px" width="32" height="7" viewBox="0 0 32 7"><path d="M0 0h32c-3 0-4 6.500-8 6.500h-16c-4 0-5-6.500-8-6.500z" fill="#2ea25a"/><path d="M13 1.500h6l-3 3.500z" fill="#fff"/></svg>
<div style="left:179px;top:428.3px;width:582.5px;height:152.5px;background:#fff;"></div>
<div style="left:179px;top:428.3px;width:572.3px;height:12px;background:#efefef;"></div>
<div style="left:179px;top:428.3px;width:30px;height:59.7px;background:#cbcbcb;"></div>
<div style="left:209px;top:439.8px;width:542.3px;height:1px;background:#d4d4d4;"></div>
<div style="left:209px;top:452.0px;width:542.3px;height:1px;background:#d4d4d4;"></div>
<div style="left:209px;top:464.0px;width:542.3px;height:1px;background:#d4d4d4;"></div>
<div style="left:209px;top:475.8px;width:542.3px;height:1px;background:#d4d4d4;"></div>
<div style="left:179px;top:487.7px;width:572.3px;height:1px;background:#d4d4d4;"></div>
<div style="left:208.5px;top:428.3px;width:1px;height:60px;background:#d4d4d4;"></div>
<div style="left:448.9px;top:428.3px;width:1px;height:60px;background:#d4d4d4;"></div>
<div style="left:480.0px;top:428.3px;width:1px;height:60px;background:#d4d4d4;"></div>
<div style="left:750.5px;top:428.3px;width:1px;height:60px;background:#d4d4d4;"></div>
<div class="t" style="top:428.3px;font-size:7.5px;color:#222;left:194px;transform:translateX(-50%);">序号</div>
<div class="t" style="top:428.3px;font-size:7.5px;color:#222;left:329px;transform:translateX(-50%);">换算说明</div>
<div class="t" style="top:428.3px;font-size:7.5px;color:#222;left:465px;transform:translateX(-50%);">换算</div>
<div class="t" style="top:428.3px;font-size:7.5px;color:#222;left:615px;transform:translateX(-50%);">换算依据</div>
<div class="t" style="top:440.4px;font-size:7.5px;color:#2b62b5;left:193.5px;transform:translateX(-50%);">1</div>
<div style="left:209.5px;top:440.8px;width:239.5px;height:11.3px;border:1px dotted #222;"></div>
<div class="t" style="top:440.5px;font-size:7.5px;color:#222;left:210.5px;letter-spacing:0px;">若墙（石）填导、基础为弧形，人工*1.1，砖用量*1.025</div>
<div style="left:460.3px;top:442.5px;width:8.5px;height:8.2px;background:#fff;border:1px solid #8a8a8a;border-bottom-color:#666;border-radius:1px;"></div>
<div class="t" style="top:440.5px;font-size:7.5px;color:#222;left:482.3px;letter-spacing:0.250px;">四川2015定额--房屋建筑与装饰工程（  ）P178页</div>
<div style="left:285.5px;top:401px;width:68.5px;height:31px;border:2px solid #f02a22;z-index:5;"></div>
<div style="left:761.3px;top:428.3px;width:134.5px;height:152.5px;background:#e3eefa;"></div>
<div class="t" style="top:433.0px;font-size:7.5px;color:#222;left:769px;">单价系数</div>
<div style="left:816px;top:431.5px;width:62.5px;height:15.0px;background:#fff;border:1px solid #d5dae2;border-right-color:#a0a6b0;border-bottom-color:#8f959e;"></div>
<div style="left:769px;top:449px;width:109.3px;height:1.3px;background:#a0a7b2;"></div>
<div class="t" style="top:456.0px;font-size:7.5px;color:#222;left:769px;">人工系数</div>
<div style="left:816px;top:455px;width:62.5px;height:14.699999999999989px;background:#fff;border:1px solid #d5dae2;border-right-color:#a0a6b0;border-bottom-color:#8f959e;"></div>
<div class="t" style="top:473.5px;font-size:7.5px;color:#222;left:769px;">材料系数</div>
<div style="left:816px;top:472.6px;width:62.5px;height:14.799999999999955px;background:#fff;border:1px solid #d5dae2;border-right-color:#a0a6b0;border-bottom-color:#8f959e;"></div>
<div class="t" style="top:491.0px;font-size:7.5px;color:#222;left:769px;">机械系数</div>
<div style="left:816px;top:490.4px;width:62.5px;height:14.600000000000023px;background:#fff;border:1px solid #d5dae2;border-right-color:#a0a6b0;border-bottom-color:#8f959e;"></div>
<div style="left:769.3px;top:509.8px;width:109px;height:13.7px;background:#e1e1e1;border:1px solid #b0b0b0;"></div>
<svg style="left:788px;top:512px" width="9" height="9" viewBox="0 0 9 9"><path d="M1.500 6a3.200 3.200 0 0 1 5.500-3.500" stroke="#2aa14a" stroke-width="1.800" fill="none"/><path d="M7.500 3a3.200 3.200 0 0 1-2 5" stroke="#2aa14a" stroke-width="1.800" fill="none"/><path d="M0 5l1.500 3l2-2.500z" fill="#2aa14a"/></svg>
<div class="t" style="top:510.6px;font-size:7.5px;color:#222;left:800.8px;">取消定额系数调整</div>
<div style="left:3px;top:580.5px;width:893.3px;height:15px;background:#f0f0f0;"></div>
<div class="t" style="top:582.0px;font-size:7.5px;color:#222;left:11px;">四川</div>
<div class="t" style="top:582.0px;font-size:7.5px;color:#222;left:32px;">一般计税法</div>
<div class="t" style="top:582.0px;font-size:7.5px;color:#222;left:75px;">四川2015清单计价定额</div>
<div class="t" style="top:582.0px;font-size:7.5px;color:#222;left:163px;">川建造价发[2019]181号</div>
<div style="left:252px;top:583px;width:1px;height:12px;background:#e6e6e6;"></div>
<div class="t" style="top:582.0px;font-size:7.5px;color:#222;left:273px;transform:translateX(-50%);">就绪</div>
<div style="left:290px;top:583px;width:1px;height:12px;background:#e0e0e0;"></div>
<div class="t" style="top:582.0px;font-size:7.5px;color:#222;left:297px;">编辑 干混砂浆</div>
<div class="t" style="top:582.0px;font-size:7.5px;color:#222;left:564px;">计数: 1</div>
<div style="left:777px;top:580.8px;width:34px;height:15px;background:#fff;border-left:1px solid #dadada;border-right:1px solid #dadada;"></div>
<div class="t" style="top:582.5px;font-size:7.5px;color:#222;left:781px;">100%</div>
<svg style="left:804.5px;top:587px" width="5" height="4" viewBox="0 0 5 4"><path d="M0.500 0.500l2 2.200l2-2.200" stroke="#444" stroke-width="0.900" fill="none"/></svg>
<svg style="left:815px;top:584.5px" width="8" height="8" viewBox="0 0 8 8"><circle cx="4" cy="4" r="3.300" fill="none" stroke="#666" stroke-width="0.800"/><path d="M2.200 4h3.600" stroke="#666" stroke-width="0.800"/></svg>
<div style="left:830px;top:588.3px;width:48px;height:1px;background:#c8c8c8;"></div>
<svg style="left:852.5px;top:582.5px" width="5.5" height="11" viewBox="0 0 5.5 11"><path d="M0 0h5.500v8l-2.750 3l-2.750-3z" fill="#1e6fd0"/></svg>
</body></html>
